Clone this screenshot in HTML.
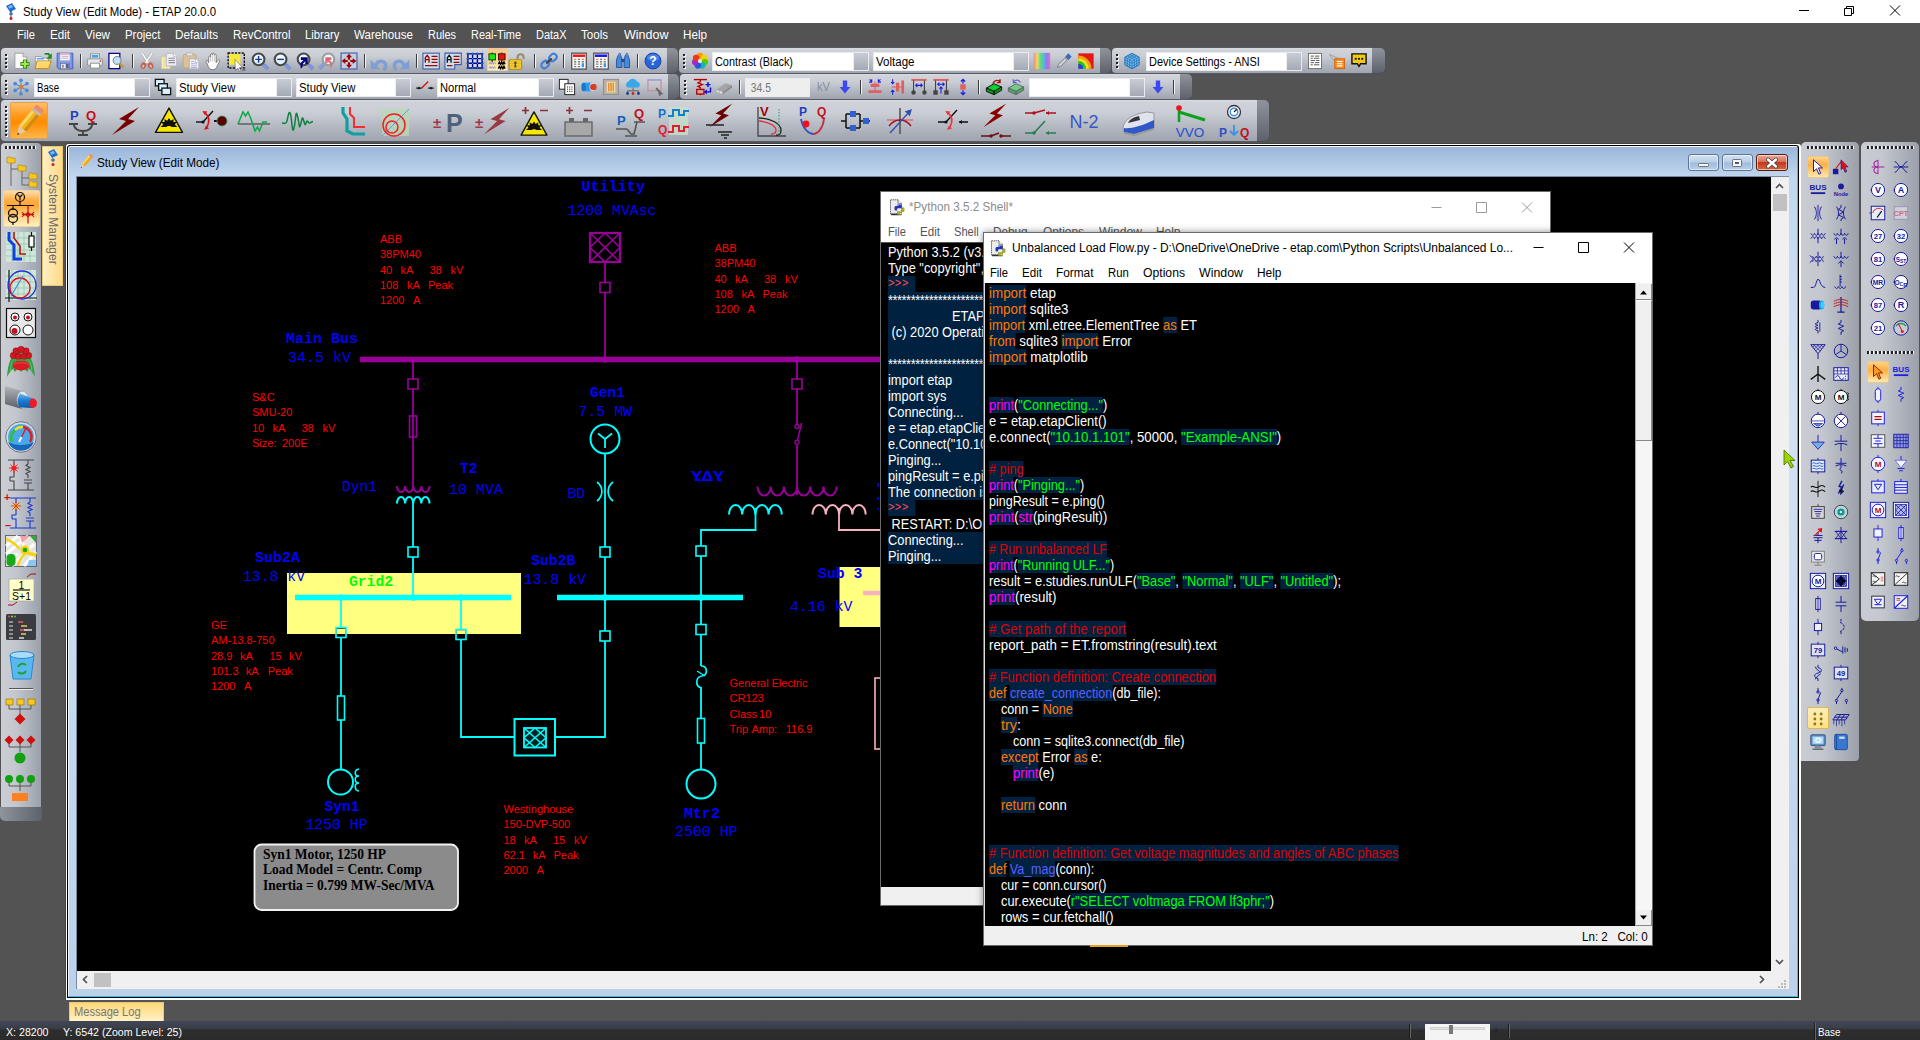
<!DOCTYPE html>
<html><head><meta charset="utf-8"><title>Study View (Edit Mode) - ETAP 20.0.0</title>
<style>
*{box-sizing:border-box;margin:0;padding:0}
html,body{width:1920px;height:1040px;overflow:hidden;background:#535353;font-family:"Liberation Sans",sans-serif;font-size:12px;color:#000}
.a{position:absolute}
.t{position:absolute;white-space:nowrap;line-height:1}
svg{position:absolute;overflow:visible}
#titlebar{left:0;top:0;width:1920px;height:23px;background:#fff}
#menubar{left:0;top:23px;width:1920px;height:25px;background:#535353}
#menubar .t{color:#fff;font-size:12.5px;top:6px}
.tb{position:absolute;height:25px;border-radius:4px 0 0 4px;background:linear-gradient(#d9dce0 0,#cfd2d8 2px,#cbcfd5 30%,#b8bcc5 58%,#9fa4ae);box-shadow:0 1px 0 #545a68,0 -1px 0 #545a68}
.tbcap{position:absolute;height:25px;border-radius:0 5px 5px 0;background:linear-gradient(#8f949d,#5d6169);box-shadow:0 1px 0 #4a4e58}
.grip{position:absolute;width:3px;height:17px;background:repeating-linear-gradient(#222 0,#222 2px,transparent 2px,transparent 4px) 0 0/2px 16px no-repeat,repeating-linear-gradient(#fff 0,#fff 2px,transparent 2px,transparent 4px) 1px 1px/2px 16px no-repeat}
.sep{position:absolute;width:1px;height:14px;background:#3c3c3c;box-shadow:1px 0 0 #f2f2f2}
.combo{position:absolute;height:19px;background:#fff;border:1px solid #e9ebef;font-size:12px;line-height:19px;padding-left:2px;white-space:nowrap;overflow:hidden}
.combo i{position:absolute;right:0;top:0;width:15px;height:17px;background:linear-gradient(#c8ccd4,#a4a9b4);border-left:1px solid #eee}
.s{display:inline-block;transform:scaleX(.92);transform-origin:0 50%}
.wb{top:154px;width:31px;height:17px;border:1px solid #5d7595;border-radius:3px;background:linear-gradient(#d4e2f3,#b9cfe8 48%,#9fbbdc 52%,#b7cfea);box-shadow:inset 0 0 0 1px rgba(255,255,255,.55)}
.pw{position:absolute;background:#fff;border:1px solid #6a6a6a}
.pw .t{font-size:12px}
.code{position:absolute;white-space:pre;font-size:14px;line-height:16px;color:#fff;transform-origin:0 0}
.code div{height:16px}
.code span{display:inline-block;height:16px;vertical-align:top}
.code .ln{transform-origin:0 0}
.k{color:#ff7700;background:#002240}.c{color:#dd0000;background:#002240}.g{color:#02ff02;background:#002240}.d{color:#5e5eff;background:#002240}.b{color:#ff00ff;background:#002240}
.o{background:#002240}.p{color:#ff4a4a;background:#002240;font-family:"Liberation Mono",monospace;font-size:12px;letter-spacing:.3px}

</style></head><body>
<div class="a" id="titlebar">
<svg style="left:4px;top:3px" width="14" height="18" viewBox="0 0 14 18"><path d="M2 3L8 0L12 6L6 9Z" fill="#1f6fd0"/><path d="M4 3.5L7.5 1.8L9 4L5.5 5.8Z" fill="#7db9f2"/><path d="M7 8v4" stroke="#333" stroke-width="1.2"/><circle cx="7" cy="11" r="1.8" fill="#4a6fb0"/><path d="M7 13v2" stroke="#333"/><circle cx="7" cy="15.5" r="1.5" fill="#d02020"/></svg>
<div class="t" style="left:23px;top:6px;font-size:12.4px;color:#000"><span class="s" style="transform:scaleX(0.9218)">Study View (Edit Mode) - ETAP 20.0.0</span></div>
<svg style="left:1780px;top:0" width="140" height="23" viewBox="0 0 140 23"><path d="M19 10.5h10M64.5 8.5h7v7h-7zM66.5 8.5v-2h7v7h-2M110 5.5l10 10M120 5.5l-10 10" stroke="#000" stroke-width="1" fill="none"/></svg>
</div>
<div class="a" id="menubar">
<div class="t" style="left:17px"><span class="s" style="transform:scaleX(0.8930)">File</span></div>
<div class="t" style="left:50px"><span class="s" style="transform:scaleX(0.9282)">Edit</span></div>
<div class="t" style="left:85px"><span class="s" style="transform:scaleX(0.9302)">View</span></div>
<div class="t" style="left:125px"><span class="s" style="transform:scaleX(0.9124)">Project</span></div>
<div class="t" style="left:175px"><span class="s" style="transform:scaleX(0.9376)">Defaults</span></div>
<div class="t" style="left:233px"><span class="s" style="transform:scaleX(0.9195)">RevControl</span></div>
<div class="t" style="left:305px"><span class="s" style="transform:scaleX(0.9027)">Library</span></div>
<div class="t" style="left:354px"><span class="s" style="transform:scaleX(0.9296)">Warehouse</span></div>
<div class="t" style="left:428px"><span class="s" style="transform:scaleX(0.8759)">Rules</span></div>
<div class="t" style="left:471px"><span class="s" style="transform:scaleX(0.8743)">Real-Time</span></div>
<div class="t" style="left:536px"><span class="s" style="transform:scaleX(0.8777)">DataX</span></div>
<div class="t" style="left:581px"><span class="s" style="transform:scaleX(0.9251)">Tools</span></div>
<div class="t" style="left:624px"><span class="s" style="transform:scaleX(1.0007)">Window</span></div>
<div class="t" style="left:683px"><span class="s" style="transform:scaleX(0.9332)">Help</span></div>
</div>
<div class="tb" style="left:1px;top:48px;width:666px"></div><div class="tbcap" style="left:667px;top:48px;width:11px"></div>
<div class="grip" style="left:5px;top:54px"></div>
<svg style="left:13.5px;top:53.0px" width="16" height="16" viewBox="0 0 16 16"><g transform="translate(8 8) scale(1.09) translate(-8 -8)"><path d="M1.5 .8h7.5l3.5 3.5v10.500h-11z" fill="#fbfbfb" stroke="#9a9a9a" stroke-width=".8"/><path d="M9 .8v3.5h3.5" fill="#ddd" stroke="#9a9a9a" stroke-width=".8"/><path d="M6.5 10.800h8.400M10.700 6.600v8.400" stroke="#3d8f12" stroke-width="3.800"/><path d="M7.300 10.800h6.800M10.700 7.400v6.800" stroke="#a6e34e" stroke-width="1.900"/></g></svg>
<svg style="left:35.0px;top:53.0px" width="16" height="16" viewBox="0 0 16 16"><g transform="translate(8 8) scale(1.09) translate(-8 -8)"><path d="M1 4h5.500l1 1.300H13V13H1z" fill="#f2f6fc" stroke="#8a9ab8" stroke-width=".8"/><path d="M2.300 6h6.500" stroke="#4a90e8" stroke-width="1.100"/><path d="M.8 15l1.700-7h13l-2.200 7z" fill="#ffd568" stroke="#b98a14" stroke-width=".9"/><path d="M2.500 14l1.200-5h10.300" stroke="#ffe9a8" stroke-width=".8" fill="none"/><path d="M9.500 1.500h3.500l2 2.500" stroke="#1c8a1c" stroke-width="1.600" fill="none"/><path d="M16 1v5h-5z" fill="#1c8a1c"/></g></svg>
<svg style="left:57.0px;top:53.0px" width="16" height="16" viewBox="0 0 16 16"><g transform="translate(8 8) scale(1.09) translate(-8 -8)"><path d="M.8 .8h14.400v14.400H2.300L.8 13.700z" fill="#6f8be4" stroke="#4a64c0" stroke-width=".9"/><path d="M2 2v11.500l1 1h11V2z" fill="#8ea8f0" opacity=".6"/><rect x="3.500" y="1" width="9" height="6.500" fill="#f4f4f8" stroke="#b8b8c8" stroke-width=".5"/><rect x="3.500" y="1" width="9" height="1.300" fill="#e8a0c0"/><path d="M5 3.800h6M5 5.500h6" stroke="#a9a9b8" stroke-width=".7"/><rect x="4" y="10.200" width="8" height="5" fill="#e8e8f0" stroke="#556" stroke-width=".5"/><rect x="8.700" y="10.700" width="2.800" height="4" fill="#5a5f98"/><rect x="5.500" y="11.500" width="1.200" height="2.500" fill="#667"/></g></svg>
<svg style="left:87.0px;top:53.0px" width="16" height="16" viewBox="0 0 16 16"><g transform="translate(8 8) scale(1.09) translate(-8 -8)"><rect x="4" y="1.5" width="8" height="5" fill="#fff" stroke="#888" stroke-width=".8"/><rect x="5" y="2.5" width="6" height="2.5" fill="#4aa3e8"/><rect x="1" y="6" width="14" height="6" rx="1.2" fill="#e4e6ea" stroke="#888" stroke-width=".8"/><rect x="4" y="10" width="8" height="4.5" fill="#fff" stroke="#888" stroke-width=".8"/><circle cx="13" cy="8" r=".8" fill="#e02020"/></g></svg>
<svg style="left:108.0px;top:53.0px" width="16" height="16" viewBox="0 0 16 16"><g transform="translate(8 8) scale(1.09) translate(-8 -8)"><rect x="1.5" y="1" width="10" height="14" fill="#fff" stroke="#0b0b88" stroke-width="1.2"/><circle cx="9" cy="7.5" r="3.6" fill="#bfe2fb" stroke="#8a8a8a" stroke-width="1"/><path d="M11.5 10.5l3.5 3.5" stroke="#c9962c" stroke-width="2"/></g></svg>
<svg style="left:139.0px;top:53.0px" width="16" height="16" viewBox="0 0 16 16"><g transform="translate(8 8) scale(1.09) translate(-8 -8)"><path d="M3.200 .5L9.800 10.500M12.800 .5L6.200 10.500" stroke="#a8a8a8" stroke-width="2.600"/><path d="M3.200 .5L9.800 10.500M12.800 .5L6.200 10.500" stroke="#f4f4f4" stroke-width="1.500"/><ellipse cx="4.700" cy="12.300" rx="2.500" ry="3.200" transform="rotate(25 4.700 12.300)" fill="#c7634e"/><ellipse cx="11.300" cy="12.300" rx="2.500" ry="3.200" transform="rotate(-25 11.300 12.300)" fill="#c7634e"/><ellipse cx="4.500" cy="12.800" rx=".9" ry="1.500" transform="rotate(25 4.500 12.800)" fill="#c4c8d0"/><ellipse cx="11.500" cy="12.800" rx=".9" ry="1.500" transform="rotate(-25 11.500 12.800)" fill="#c4c8d0"/></g></svg>
<svg style="left:161.0px;top:53.0px" width="16" height="16" viewBox="0 0 16 16"><g transform="translate(8 8) scale(1.09) translate(-8 -8)"><path d="M1 3.500h8.500V15H1z" fill="#efe2a2" stroke="#d0bd88" stroke-width=".8"/><path d="M1.800 4.300v10h7" stroke="#f8f0c8" stroke-width=".8" fill="none"/><path d="M5.500 1h6.500l3 3v8.500H5.500z" fill="#eeeef4" stroke="#b4b4c0" stroke-width=".8"/><path d="M12 1v3h3" fill="#fff" stroke="#b4b4c0" stroke-width=".7"/><path d="M7.500 5.500h6M7.500 7.500h6M7.500 9.500h6" stroke="#8a8a94" stroke-width="1"/></g></svg>
<svg style="left:183.0px;top:53.0px" width="16" height="16" viewBox="0 0 16 16"><g transform="translate(8 8) scale(1.09) translate(-8 -8)"><rect x=".8" y="1.800" width="12" height="12.500" rx="1.800" fill="#dcc096" stroke="#c4a678" stroke-width=".8"/><rect x="4" y=".6" width="5.500" height="2.600" rx=".8" fill="#e8e8ec" stroke="#aaa" stroke-width=".6"/><path d="M6.500 6h5.500l3.200 3.200v6H6.500z" fill="#eeeef4" stroke="#b4b4c0" stroke-width=".8"/><path d="M12 6v3.200h3.200" fill="#fff" stroke="#b4b4c0" stroke-width=".7"/><path d="M8 8.500h3M8 10.500h5.500M8 12.500h5.500M8 14h5.500" stroke="#a8acd8" stroke-width=".8"/></g></svg>
<svg style="left:205.0px;top:53.0px" width="16" height="16" viewBox="0 0 16 16"><g transform="translate(8 8) scale(1.09) translate(-8 -8)"><path d="M4 9.500V4.500c0-1.300 1.700-1.300 1.700 0V2.300c0-1.300 1.700-1.300 1.700 0V1.800c0-1.300 1.800-1.300 1.800 0v.8c0-1.200 1.700-1.200 1.700 0v7l1.500-2.200c.8-1 2.200-.2 1.600.9L11.500 13.500c-.9 1.600-1.900 2.500-3.800 2.500C5 16 3.500 14 3.200 11.500L1.500 8.500c-.5-1 .8-1.700 1.500-.8z" fill="#fff" stroke="#666" stroke-width=".7"/><path d="M5.700 4.500v4M7.400 2.500v6M9.200 2.600v6" stroke="#999" stroke-width=".5"/></g></svg>
<svg style="left:228.0px;top:53.0px" width="16" height="16" viewBox="0 0 16 16"><g transform="translate(8 8) scale(1.09) translate(-8 -8)"><rect x="1.500" y="1.200" width="10.500" height="10.300" fill="#f6e83c"/><rect x=".8" y=".6" width="14.800" height="13.800" fill="none" stroke="#111" stroke-width="1.300" stroke-dasharray="2 1.100"/><path d="M7 6.500l7 7.500-3 .2 1.400 2.600-1.300.6-1.400-2.700L7.500 16.500z" fill="#fff" stroke="#555" stroke-width=".5"/><path d="M16.500 13.500v3.500H13z" fill="#666"/></g></svg>
<svg style="left:252.0px;top:53.0px" width="16" height="16" viewBox="0 0 16 16"><g transform="translate(8 8) scale(1.09) translate(-8 -8)"><rect x="-2.400" y="-1.500" width="5.500" height="3" rx="1" fill="#7c9ae6" stroke="#5c7acc" stroke-width=".5" transform="translate(13 13) rotate(45)"/><circle cx="6.7" cy="6.500" r="5.400" fill="#e2f1fb" stroke="#484848" stroke-width="1.900"/><ellipse cx="6.7" cy="4.600" rx="3.600" ry="1.900" fill="#fff" opacity=".55"/><path d="M3.700 6.500h6M6.700 3.500v6" stroke="#1a3a8a" stroke-width="1.300"/></g></svg>
<svg style="left:274.0px;top:53.0px" width="16" height="16" viewBox="0 0 16 16"><g transform="translate(8 8) scale(1.09) translate(-8 -8)"><rect x="-2.400" y="-1.500" width="5.500" height="3" rx="1" fill="#7c9ae6" stroke="#5c7acc" stroke-width=".5" transform="translate(13 13) rotate(45)"/><circle cx="6.7" cy="6.500" r="5.400" fill="#e2f1fb" stroke="#484848" stroke-width="1.900"/><ellipse cx="6.7" cy="4.600" rx="3.600" ry="1.900" fill="#fff" opacity=".55"/><path d="M3.700 6.500h6" stroke="#1a3a8a" stroke-width="1.300"/></g></svg>
<svg style="left:296.5px;top:53.0px" width="16" height="16" viewBox="0 0 16 16"><g transform="translate(8 8) scale(1.09) translate(-8 -8)"><rect x="-2.400" y="-1.500" width="5.500" height="3" rx="1" fill="#7c9ae6" stroke="#5c7acc" stroke-width=".5" transform="translate(13 13) rotate(45)"/><circle cx="6.7" cy="6.500" r="5.400" fill="#e2f1fb" stroke="#484848" stroke-width="1.900"/><ellipse cx="6.7" cy="4.600" rx="3.600" ry="1.900" fill="#fff" opacity=".55"/><path d="M4.200 4.500h6.300v6.300H8.300V8.300L5.800 10.800v3l-1.800 1-.3-4.800 3-3H4.200z" fill="#000080"/></g></svg>
<svg style="left:318.5px;top:53.0px" width="16" height="16" viewBox="0 0 16 16"><g transform="translate(8 8) scale(1.09) translate(-8 -8)"><rect x="-2.400" y="-1.500" width="5.500" height="3" rx="1" fill="#7c9ae6" stroke="#5c7acc" stroke-width=".5" transform="translate(3 13) rotate(-45)" opacity=".75"/><circle cx="9.3" cy="6.500" r="5.400" fill="#e2f1fb" stroke="#9c9c9c" stroke-width="1.900"/><ellipse cx="9.3" cy="4.600" rx="3.600" ry="1.900" fill="#fff" opacity=".55"/><path d="M12 4.500H6.500v5.500h2V8l2.500 2.500c.8 1.500.5 3.500-.5 4.500 2.500-1 3-4 1.500-6L10 7h2z" fill="#e0686e"/></g></svg>
<svg style="left:341.0px;top:53.0px" width="16" height="16" viewBox="0 0 16 16"><g transform="translate(8 8) scale(1.09) translate(-8 -8)"><rect x=".7" y=".7" width="14.600" height="14.600" fill="#c6cddc" stroke="#3a5ab0" stroke-width="1"/><g fill="#a00000"><path d="M8 1.300l2.800 3.300H9v2.200H7V4.600H5.200z"/><path d="M8 14.700l2.800-3.300H9V9.200H7v2.200H5.200z"/><path d="M1.300 8l3.300-2.800V7h2.200v2H4.600v1.800z"/><path d="M14.700 8l-3.300-2.800V7H9.200v2h2.200v1.800z"/></g></g></svg>
<svg style="left:371.0px;top:53.0px" width="16" height="16" viewBox="0 0 16 16"><g transform="translate(8 8) scale(1.09) translate(-8 -8)"><path d="M5.500 12.500a4.300 4.300 0 1 1 6.500 3.700" stroke="#7f9fd4" stroke-width="3.200" fill="none"/><path d="M.3 6.800l8.700 8.700H.3z" fill="#7f9fd4"/></g></svg>
<svg style="left:393.0px;top:53.0px" width="16" height="16" viewBox="0 0 16 16"><g transform="translate(8 8) scale(1.09) translate(-8 -8)"><path d="M10.500 12.500a4.300 4.300 0 1 0-6.500 3.700" stroke="#7f9fd4" stroke-width="3.200" fill="none"/><path d="M15.700 6.800l-8.700 8.700h8.700z" fill="#7f9fd4"/></g></svg>
<svg style="left:423.0px;top:53.0px" width="16" height="16" viewBox="0 0 16 16"><g transform="translate(8 8) scale(1.09) translate(-8 -8)"><rect x=".6" y=".8" width="15" height="14.500" fill="#cfe0ea" stroke="#3a5ab0" stroke-width="1"/><path d="M2.800 9.500V5l1.700-2.200L6.200 5v4.500M2.800 6.800h3.400" stroke="#a00000" fill="none" stroke-width="1.200"/><path d="M8.500 3.800h5.500M8.500 6.500h5.500M8.500 9.200h5.500M2.500 12.300h11.500" stroke="#a00000" stroke-width="1.200"/></g></svg>
<svg style="left:445.0px;top:53.0px" width="16" height="16" viewBox="0 0 16 16"><g transform="translate(8 8) scale(1.09) translate(-8 -8)"><path d="M.6 .8h15v10.500h-6v4H.6z" fill="#cfe0ea" stroke="#3a5ab0" stroke-width="1"/><path d="M2.800 9.500V5l1.700-2.200L6.200 5v4.500M2.800 6.800h3.400" stroke="#111" fill="none" stroke-width="1.200"/><path d="M8.500 3.800h5.500M8.500 6.500h5.500M8.500 9.200h5.500M2.500 12.300h5" stroke="#a00000" stroke-width="1.200"/></g></svg>
<svg style="left:467.0px;top:53.0px" width="16" height="16" viewBox="0 0 16 16"><g transform="translate(8 8) scale(1.09) translate(-8 -8)"><rect x="1" y="1.200" width="14" height="13.600" fill="#d4dcec"/><path d="M.3 1.500h15.400M.3 5.800h15.400M.3 10.100h15.400M.3 14.400h15.400M1.500 .5v14.800M5.800 .5v14.800M10.200 .5v14.800M14.500 .5v14.800" stroke="#00008b" stroke-width="1.300"/><g fill="#00d8f0"><rect x="1.0" y="1.0" width="1" height="1"/><rect x="1.0" y="5.3" width="1" height="1"/><rect x="1.0" y="9.6" width="1" height="1"/><rect x="1.0" y="13.9" width="1" height="1"/><rect x="5.3" y="1.0" width="1" height="1"/><rect x="5.3" y="5.3" width="1" height="1"/><rect x="5.3" y="9.6" width="1" height="1"/><rect x="5.3" y="13.9" width="1" height="1"/><rect x="9.7" y="1.0" width="1" height="1"/><rect x="9.7" y="5.3" width="1" height="1"/><rect x="9.7" y="9.6" width="1" height="1"/><rect x="9.7" y="13.9" width="1" height="1"/><rect x="14.0" y="1.0" width="1" height="1"/><rect x="14.0" y="5.3" width="1" height="1"/><rect x="14.0" y="9.6" width="1" height="1"/><rect x="14.0" y="13.9" width="1" height="1"/></g></g></svg>
<svg style="left:509.0px;top:53.0px" width="16" height="16" viewBox="0 0 16 16"><g transform="translate(8 8) scale(1.09) translate(-8 -8)"><path d="M8.500 7V4.500c0-3.500 5.500-3.500 5.500 0v1.700" stroke="#9a8a6a" stroke-width="1.900" fill="none"/><rect x=".8" y="6.800" width="11.500" height="8.700" rx="1" fill="#f6d838" stroke="#b88a10" stroke-width="1"/><path d="M1.500 8.700h10M1.500 10.300h10M1.500 11.900h10M1.500 13.500h10" stroke="#e0a818" stroke-width=".7"/><path d="M6.500 8.500a1.200 1.200 0 0 1 .6 2.200l.3 3.300h-1.800l.3-3.300a1.200 1.200 0 0 1 .6-2.200z" fill="#444"/></g></svg>
<svg style="left:541.0px;top:53.0px" width="16" height="16" viewBox="0 0 16 16"><g transform="translate(8 8) scale(1.09) translate(-8 -8)"><g transform="rotate(-42 8 8)" fill="none"><rect x="-.5" y="5.200" width="7.500" height="5.600" rx="2.800" stroke="#3f80d4" stroke-width="1.900"/><rect x="9" y="5.200" width="7.500" height="5.600" rx="2.800" stroke="#3f80d4" stroke-width="1.900"/><path d="M4.500 8h7" stroke="#444" stroke-width="2"/></g></g></svg>
<svg style="left:571.0px;top:53.0px" width="16" height="16" viewBox="0 0 16 16"><g transform="translate(8 8) scale(1.09) translate(-8 -8)"><rect x="1.300" y=".8" width="13.400" height="14.600" fill="#fafafa" stroke="#555" stroke-width="1.200"/><rect x="2.500" y="2" width="11" height="2.300" fill="#f01818"/><path d="M3.500 6.500h2M10.500 6.500h2" stroke="#f08020" stroke-width="1.200"/><path d="M7 6.500h2M3.500 8.700h2M7 8.700h2M10.500 8.700h2M3.500 10.900h2M7 10.900h2M3.500 13.100h2M7 13.100h2" stroke="#777" stroke-width="1.200"/><rect x="10.400" y="10" width="2.200" height="3.700" fill="#3a98f0"/></g></svg>
<svg style="left:593.0px;top:53.0px" width="16" height="16" viewBox="0 0 16 16"><g transform="translate(8 8) scale(1.09) translate(-8 -8)"><rect x="1.300" y=".8" width="13.400" height="14.600" fill="#fafafa" stroke="#555" stroke-width="1.200"/><rect x="2.500" y="2" width="11" height="2.300" fill="#1818f0"/><path d="M3.500 6.500h2M10.500 6.500h2" stroke="#f08020" stroke-width="1.200"/><path d="M7 6.500h2M3.500 8.700h2M7 8.700h2M10.500 8.700h2M3.500 10.900h2M7 10.900h2M3.500 13.100h2M7 13.100h2" stroke="#777" stroke-width="1.200"/><rect x="10.400" y="10" width="2.200" height="3.700" fill="#3a98f0"/></g></svg>
<svg style="left:615.0px;top:53.0px" width="16" height="16" viewBox="0 0 16 16"><g transform="translate(8 8) scale(1.09) translate(-8 -8)"><path d="M2 14V7l1.500-4h2.500L7 7v7zM9 14V7l1-4h2.500L14 7v7z" fill="#4a88d8" stroke="#1d4da0" stroke-width=".8"/><rect x="6.500" y="6" width="3" height="3" fill="#1d4da0"/><path d="M3.500 3l1-2h1l.500 2M10.500 3l.5-2h1l1 2" fill="#7db0ee" stroke="#1d4da0" stroke-width=".6"/></g></svg>
<svg style="left:645.0px;top:53.0px" width="16" height="16" viewBox="0 0 16 16"><g transform="translate(8 8) scale(1.09) translate(-8 -8)"><circle cx="8" cy="8" r="7.300" fill="#2a62d8" stroke="#153a9a" stroke-width=".8"/><ellipse cx="8" cy="5" rx="5.500" ry="3.200" fill="#5a92f0" opacity=".7"/><text x="8" y="12" font-size="11" font-weight="bold" fill="#fff" text-anchor="middle" font-family="Liberation Sans">?</text></g></svg>
<div class="a" style="left:486.500px;top:48px;width:21px;height:23px;background:linear-gradient(#f2c896,#ffcf88 35%,#ffe29c 70%,#fff0c4);border:1px solid #e8d0a8;border-top:0"></div>
<svg style="left:489.0px;top:53.0px" width="16" height="16" viewBox="0 0 16 16"><g transform="translate(8 8) scale(1.09) translate(-8 -8)"><rect x=".6" y="1.400" width="6" height="5.600" fill="#10f010" stroke="#1a3a1a" stroke-width=".9"/><rect x="9.400" y="1.400" width="6" height="5.600" fill="#f01010" stroke="#3a1010" stroke-width=".9"/><path d="M3.600 .2v1.200M12.400 .2v1.200M3.600 7v2M12.400 7v2" stroke="#222" stroke-width="1"/><path d="M.5 11l1-2 1.100 2 1-2 1.100 2 1-2 1 2M.5 15l1-2 1.100 2 1-2 1.100 2 1-2 1 2" stroke="#8a96b8" fill="none" stroke-width=".8"/><path d="M9.200 11l1-2 1.100 2 1-2 1.100 2 1-2 1 2M9.200 15l1-2 1.100 2 1-2 1.100 2 1-2 1 2" stroke="#000" fill="none" stroke-width="1.300"/></g></svg>
<div class="sep" style="left:79.5px;top:54px"></div>
<div class="sep" style="left:131.5px;top:54px"></div>
<div class="sep" style="left:363.5px;top:54px"></div>
<div class="sep" style="left:415.5px;top:54px"></div>
<div class="sep" style="left:533.5px;top:54px"></div>
<div class="sep" style="left:563.0px;top:54px"></div>
<div class="sep" style="left:636.5px;top:54px"></div>
<div class="tb" style="left:679px;top:48px;width:421px"></div><div class="tbcap" style="left:1100px;top:48px;width:11px"></div>
<div class="grip" style="left:683px;top:54px"></div>
<svg style="left:692.0px;top:53.0px" width="16" height="16" viewBox="0 0 16 16"><g transform="translate(8 8) scale(1.09) translate(-8 -8)"><path d="M8 8L5.18 2.14L10.82 2.14z" fill="#f59a00"/><path d="M8 8L10.82 2.14L14.34 6.55z" fill="#f2d200"/><path d="M8 8L14.34 6.55L13.08 12.05z" fill="#5cc800"/><path d="M8 8L13.08 12.05L8.00 14.50z" fill="#14b4b0"/><path d="M8 8L8.00 14.50L2.92 12.05z" fill="#2458dc"/><path d="M8 8L2.92 12.05L1.66 6.55z" fill="#a428cc"/><path d="M8 8L1.66 6.55L5.18 2.14z" fill="#f43410"/><circle cx="8.00" cy="3.40" r="2.900" fill="#f59a00"/><circle cx="11.60" cy="5.13" r="2.900" fill="#f2d200"/><circle cx="12.48" cy="9.02" r="2.900" fill="#5cc800"/><circle cx="10.00" cy="12.14" r="2.900" fill="#14b4b0"/><circle cx="6.00" cy="12.14" r="2.900" fill="#2458dc"/><circle cx="3.52" cy="9.02" r="2.900" fill="#a428cc"/><circle cx="4.40" cy="5.13" r="2.900" fill="#f43410"/><circle cx="8" cy="8" r="2" fill="#d4d6da"/><circle cx="8" cy="8" r="1" fill="#f4f4f4"/></g></svg>
<div class="combo" style="left:712px;top:51.5px;width:157px;color:#000;background:#fff"><span class="s" style="transform:scaleX(0.9066)">Contrast (Black)</span><i></i></div>
<div class="combo" style="left:873px;top:51.5px;width:156px;color:#000;background:#fff"><span class="s" style="transform:scaleX(0.9614)">Voltage</span><i></i></div>
<svg style="left:1034.0px;top:53.0px" width="16" height="16" viewBox="0 0 16 16"><g transform="translate(8 8) scale(1.09) translate(-8 -8)"><defs><linearGradient id="sp"><stop offset="0" stop-color="#f08080"/><stop offset=".2" stop-color="#f0e060"/><stop offset=".42" stop-color="#50e070"/><stop offset=".62" stop-color="#50b0f0"/><stop offset=".8" stop-color="#9070f0"/><stop offset="1" stop-color="#f060c0"/></linearGradient></defs><rect x=".5" y=".5" width="15" height="15" fill="url(#sp)" opacity=".9"/></g></svg>
<svg style="left:1056.0px;top:53.0px" width="16" height="16" viewBox="0 0 16 16"><g transform="translate(8 8) scale(1.09) translate(-8 -8)"><path d="M2 14l1-3 6-6 2 2-6 6z" fill="#c8d0dc" stroke="#777" stroke-width=".8"/><path d="M9 4l3-3 3 3-3 3z" fill="#3a6ab8"/></g></svg>
<svg style="left:1078.0px;top:53.0px" width="16" height="16" viewBox="0 0 16 16"><g transform="translate(8 8) scale(1.09) translate(-8 -8)"><rect x="1" y="1" width="14" height="14" fill="#e01818"/><path d="M1 15V3a12 12 0 0 1 12 12z" fill="#f0a010"/><path d="M1 15V5.500a9.500 9.500 0 0 1 9.500 9.500z" fill="#f0e020"/><path d="M1 15V8a7 7 0 0 1 7 7z" fill="#20c030"/><path d="M1 15v-4.500a4.500 4.500 0 0 1 4.500 4.500z" fill="#2040e0"/><path d="M1 15v-2a2 2 0 0 1 2 2z" fill="#9020c0"/></g></svg>
<div class="tb" style="left:1112px;top:48px;width:260px"></div><div class="tbcap" style="left:1372px;top:48px;width:13px"></div>
<div class="grip" style="left:1116px;top:54px"></div>
<svg style="left:1124.0px;top:53.0px" width="16" height="16" viewBox="0 0 16 16"><g transform="translate(8 8) scale(1.09) translate(-8 -8)"><path d="M8 1l6.500 3.500v7L8 15l-6.500-3.500v-7z" fill="#7cc4f0" stroke="#1464b4" stroke-width=".9"/><path d="M1.500 4.500L8 8l6.500-3.500M8 8v7M3.700 3.300l6.500 3.500v7M5.800 2.200l6.500 3.500v7M12.300 3.300l-6.500 3.500v7M10.200 2.200L3.700 5.700v7M1.500 6.800L8 10.300l6.500-3.500M1.500 9.200L8 12.700l6.500-3.500" stroke="#1464b4" stroke-width=".6" fill="none"/></g></svg>
<div class="combo" style="left:1146px;top:51.5px;width:156px;color:#000;background:#fff"><span class="s" style="transform:scaleX(0.9128)">Device Settings - ANSI</span><i></i></div>
<svg style="left:1307.0px;top:53.0px" width="16" height="16" viewBox="0 0 16 16"><g transform="translate(8 8) scale(1.09) translate(-8 -8)"><rect x="2" y="1" width="12" height="14" fill="#fff" stroke="#666" stroke-width=".8"/><path d="M4 3.500h3M8 3.500h4M4 5.500h2M7 5.500h5M4 7.500h4M9 7.500h3M4 9.500h3M8 9.500h4M4 11.500h2M7 11.500h5" stroke="#555" stroke-width=".9"/></g></svg>
<svg style="left:1329.0px;top:53.0px" width="16" height="16" viewBox="0 0 16 16"><g transform="translate(8 8) scale(1.09) translate(-8 -8)"><path d="M1 2l9 4v8z" fill="none" stroke="#999" stroke-width=".8"/><rect x="6" y="6" width="9" height="9" fill="#ff8a20" stroke="#d06000" stroke-width=".8"/><path d="M8 8.500h5M8 10.500h5M8 12.500h5" stroke="#fff" stroke-width="1"/></g></svg>
<svg style="left:1351.0px;top:53.0px" width="16" height="16" viewBox="0 0 16 16"><g transform="translate(8 8) scale(1.09) translate(-8 -8)"><path d="M1.500 1.500h13v9h-5L8 13l-1.500-2.500h-5z" fill="#f0c818" stroke="#111" stroke-width="1.300"/><circle cx="5" cy="6" r="1" fill="#111"/><circle cx="8" cy="6" r="1" fill="#111"/><circle cx="11" cy="6" r="1" fill="#111"/></g></svg>
<div class="tb" style="left:1px;top:74px;width:667px"></div><div class="tbcap" style="left:668px;top:74px;width:11px"></div>
<div class="grip" style="left:5px;top:80px"></div>
<svg style="left:13.0px;top:79.0px" width="16" height="16" viewBox="0 0 16 16"><g transform="translate(8 8) scale(1.09) translate(-8 -8)"><g stroke="#4a90d8" stroke-width="1"><path d="M8 8L8 2M8 8L13.200 5M8 8L13.200 11M8 8L8 14M8 8L2.800 11M8 8L2.800 5"/></g><g fill="#4a8ad8"><circle cx="8" cy="1.800" r="1.700"/><circle cx="13.400" cy="4.900" r="1.700"/><circle cx="13.400" cy="11.100" r="1.700"/><circle cx="8" cy="14.200" r="1.700"/><circle cx="2.600" cy="11.100" r="1.700"/><circle cx="2.600" cy="4.900" r="1.700"/></g><circle cx="8" cy="8" r="1.900" fill="#e87a20"/></g></svg>
<div class="combo" style="left:34px;top:77.5px;width:116px;color:#000;background:#fff"><span class="s" style="transform:scaleX(0.8041)">Base</span><i></i></div>
<svg style="left:155.0px;top:79.0px" width="16" height="16" viewBox="0 0 16 16"><g transform="translate(8 8) scale(1.09) translate(-8 -8)"><rect x="1" y="1" width="8" height="6" fill="#d8f0ff" stroke="#111" stroke-width="1.200"/><rect x="4" y="5" width="8" height="6" fill="#d8f0ff" stroke="#111" stroke-width="1.200"/><rect x="7" y="9" width="8" height="6" fill="#d8f0ff" stroke="#111" stroke-width="1.200"/></g></svg>
<div class="combo" style="left:176px;top:77.5px;width:116px;color:#000;background:#fff"><span class="s" style="transform:scaleX(0.9413)">Study View</span><i></i></div>
<div class="combo" style="left:296px;top:77.5px;width:115px;color:#000;background:#fff"><span class="s" style="transform:scaleX(0.9413)">Study View</span><i></i></div>
<svg style="left:417.0px;top:79.0px" width="16" height="16" viewBox="0 0 16 16"><g transform="translate(8 8) scale(1.09) translate(-8 -8)"><path d="M0 9h5M11 9h5" stroke="#111" stroke-width="1.100"/><path d="M5 9l6-6" stroke="#e01010" stroke-width="1.300"/><path d="M4 9l-2-1.500v3zM12 9l2-1.500v3z" fill="#111"/></g></svg>
<div class="combo" style="left:437px;top:77.5px;width:117px;color:#000;background:#fff"><span class="s" style="transform:scaleX(0.9309)">Normal</span><i></i></div>
<svg style="left:559.0px;top:79.0px" width="16" height="16" viewBox="0 0 16 16"><g transform="translate(8 8) scale(1.09) translate(-8 -8)"><rect x="1" y="1" width="8" height="9" fill="#fff" stroke="#222" stroke-width=".9"/><rect x="6" y="5" width="9" height="10" fill="#fff" stroke="#222" stroke-width=".9"/><path d="M8 8h5M8 10h5M8 12h5" stroke="#222" stroke-width=".9" stroke-dasharray="1 1"/></g></svg>
<svg style="left:581.0px;top:79.0px" width="16" height="16" viewBox="0 0 16 16"><g transform="translate(8 8) scale(1.09) translate(-8 -8)"><path d="M3 4h8v8H3z" fill="#2a9af0"/><ellipse cx="3" cy="8" rx="2" ry="4" fill="#1878c8"/><ellipse cx="11" cy="8" rx="2.500" ry="4" fill="#d8e8f8"/><circle cx="12" cy="8" r="3" fill="#d84020"/></g></svg>
<svg style="left:603.0px;top:79.0px" width="16" height="16" viewBox="0 0 16 16"><g transform="translate(8 8) scale(1.09) translate(-8 -8)"><rect x="1" y="1" width="14" height="14" fill="#b8b0a8" stroke="#888" stroke-width=".8"/><rect x="4" y="3" width="8" height="10" fill="#f0d8a0"/><path d="M6 4v8M8 4v8M10 4v8" stroke="#d88020" stroke-width="1.100"/></g></svg>
<svg style="left:625.0px;top:79.0px" width="16" height="16" viewBox="0 0 16 16"><g transform="translate(8 8) scale(1.09) translate(-8 -8)"><path d="M3 8.500a3 3 0 0 1 1-5.500 4 4 0 0 1 7.500 0 3 3 0 0 1 1.500 5.500z" fill="#3aa8e8"/><path d="M8 8.500v3M3 14v-2.500h10V14" stroke="#555" fill="none" stroke-width=".8"/><circle cx="3" cy="14" r="1.300" fill="#223a88"/><circle cx="8" cy="14" r="1.300" fill="#d02020"/><circle cx="13" cy="14" r="1.300" fill="#223a88"/></g></svg>
<svg style="left:647.0px;top:79.0px" width="16" height="16" viewBox="0 0 16 16"><g transform="translate(8 8) scale(1.09) translate(-8 -8)"><rect x="1.500" y="1.500" width="12" height="10" fill="none" stroke="#c890a0" stroke-width="1.200"/><path d="M1.500 1.500h12" stroke="#9aa0e0" stroke-width="1.200"/><path d="M9 9l5 5-2 .3.800 1.700" stroke="#666" stroke-width="1.500" fill="#666"/></g></svg>
<div class="tb" style="left:680px;top:74px;width:500px"></div><div class="tbcap" style="left:1180px;top:74px;width:12px"></div>
<div class="grip" style="left:684px;top:80px"></div>
<svg style="left:694.0px;top:79.0px" width="16" height="16" viewBox="0 0 16 16"><g transform="translate(8 8) scale(1.09) translate(-8 -8)"><path d="M.5 1.200h12" stroke="#b00000" stroke-width="1.300"/><path d="M6.500 1.200v1.800l-2.300 1.200 4.300 1.600-4.300 1.600 2.300 1.200v1.600" stroke="#b00000" fill="none" stroke-width="1.100"/><rect x="3.200" y="10.200" width="6.600" height="4.300" fill="#e0a0a0" stroke="#b00000" stroke-width="1.200"/><path d="M5.500 14.500l1 1.300 1-1.300" fill="#b00000"/><path d="M13.500 3.500v4.500M11.200 5.800h4.600M15.800 8.500v4h-4" stroke="#0a0af0" stroke-width="1.300" fill="none"/><path d="M12.500 10.300l-3 2.200 3 2.200z" fill="#0a0af0"/></g></svg>
<svg style="left:716.0px;top:79.0px" width="16" height="16" viewBox="0 0 16 16"><g transform="translate(8 8) scale(1.09) translate(-8 -8)"><path d="M.8 10.500l8.500-6 6 1.800-8.500 6z" fill="#a4a4a4"/><path d="M.8 10.500v2.300l6 1.800v-2.300z" fill="#e4e4e4" stroke="#999" stroke-width=".4"/><path d="M6.800 12.300v2.300l8.500-6V6.300z" fill="#8a8a8a"/><path d="M3.700 11.400v2.300" stroke="#999" stroke-width=".5"/></g></svg>
<svg style="left:837.0px;top:79.0px" width="16" height="16" viewBox="0 0 16 16"><g transform="translate(8 8) scale(1.09) translate(-8 -8)"><path d="M6 2h4v6h3l-5 6-5-6h3z" fill="#3c48f0"/></g></svg>
<svg style="left:867.0px;top:79.0px" width="16" height="16" viewBox="0 0 16 16"><g transform="translate(8 8) scale(1.09) translate(-8 -8)"><path d="M8 1v14" stroke="#1010e0" stroke-width="0"/><rect x="4" y="5" width="8" height="3" fill="#e06060"/><rect x="2" y="11" width="12" height="2.500" fill="#e06060"/><path d="M8 3v10" stroke="#e06060" stroke-width="1"/><path d="M3 1l2 2M13 1l-2 2M2.500 3.500h2.500V1M13.500 3.500H11V1" stroke="#2020e0" stroke-width="1" fill="none"/></g></svg>
<svg style="left:889.0px;top:79.0px" width="16" height="16" viewBox="0 0 16 16"><g transform="translate(8 8) scale(1.09) translate(-8 -8)"><rect x="7" y="4" width="3" height="8" fill="#e06060"/><rect x="12" y="2" width="2.500" height="12" fill="#e06060"/><path d="M3 8h10" stroke="#e06060"/><path d="M4 1v4M2.500 3.500L4 5l1.500-1.500M4 15v-4M2.500 12.500L4 11l1.500 1.500" stroke="#2020e0" stroke-width="1" fill="none"/></g></svg>
<svg style="left:911.0px;top:79.0px" width="16" height="16" viewBox="0 0 16 16"><g transform="translate(8 8) scale(1.09) translate(-8 -8)"><path d="M1 1.500h14" stroke="#e06060" stroke-width="1.800"/><path d="M3 2v10M13 2v10" stroke="#444" stroke-width="1"/><circle cx="3" cy="13" r="2" fill="#444"/><circle cx="13" cy="13" r="2" fill="#444"/><path d="M5 6.500h6M6.500 5L5 6.500 6.500 8M9.500 5L11 6.500 9.500 8" stroke="#2020e0" stroke-width="1" fill="none"/></g></svg>
<svg style="left:933.0px;top:79.0px" width="16" height="16" viewBox="0 0 16 16"><g transform="translate(8 8) scale(1.09) translate(-8 -8)"><path d="M1 1.500h14" stroke="#e06060" stroke-width="1.800"/><path d="M3 2v10M13 2v10" stroke="#444" stroke-width="1"/><path d="M1 11h4v4H1zM11 11h4v4h-4z" fill="#444"/><path d="M5 5.500h6M6.500 4L5 5.500 6.500 7M9.500 4L11 5.500 9.500 7M8 14V8M6.500 9.500L8 8l1.500 1.500" stroke="#2020e0" stroke-width="1" fill="none"/></g></svg>
<svg style="left:955.0px;top:79.0px" width="16" height="16" viewBox="0 0 16 16"><g transform="translate(8 8) scale(1.09) translate(-8 -8)"><rect x="5.500" y="5.500" width="5" height="5" fill="#e06060"/><path d="M8 1v4M8 15v-4M6 3l2-2 2 2M6 13l2 2 2-2" stroke="#2020e0" stroke-width="1.200" fill="none"/></g></svg>
<svg style="left:986.0px;top:79.0px" width="16" height="16" viewBox="0 0 16 16"><g transform="translate(8 8) scale(1.09) translate(-8 -8)"><path d="M1 9l7-4 7 3-7 4z" fill="#10d030" stroke="#111" stroke-width=".9"/><path d="M1 9v3l7 3v-3zM8 12v3l7-4V8z" fill="#0a9a20" stroke="#111" stroke-width=".9"/><path d="M7 5c1-3 4-4 6-2M13.500 1v3h-3" stroke="#a01010" stroke-width="1.300" fill="none"/></g></svg>
<svg style="left:1008.0px;top:79.0px" width="16" height="16" viewBox="0 0 16 16"><g transform="translate(8 8) scale(1.09) translate(-8 -8)"><path d="M1 9l7-4 7 3-7 4z" fill="#70d080" stroke="#667" stroke-width=".9"/><path d="M1 9v3l7 3v-3zM8 12v3l7-4V8z" fill="#50a860" stroke="#667" stroke-width=".9"/><path d="M12 4c-1-3-4-3-6-1M5.500 1v3h3" stroke="#6060d0" stroke-width="1.100" fill="none"/></g></svg>
<svg style="left:1150.0px;top:79.0px" width="16" height="16" viewBox="0 0 16 16"><g transform="translate(8 8) scale(1.09) translate(-8 -8)"><path d="M6 2h4v6h3l-5 6-5-6h3z" fill="#3c48f0"/></g></svg>
<div class="sep" style="left:738.5px;top:80px"></div>
<div class="sep" style="left:859.5px;top:80px"></div>
<div class="sep" style="left:977.5px;top:80px"></div>
<div class="sep" style="left:1172.5px;top:80px"></div>
<div class="combo" style="left:745px;top:77.5px;width:65px;color:#777;background:#eee"><span class="s" style="transform:scaleX(0.8613)">&nbsp;34.5</span></div>
<div class="t" style="left:817px;top:81px;font-size:12px;color:#8a8e98"><span class="s" style="transform:scaleX(0.9275)">kV</span></div>
<div class="combo" style="left:1029px;top:77.5px;width:116px;color:#000;background:#fff"><i></i></div>
<div class="tb" style="left:1px;top:100px;width:1256px;height:41px;border-radius:4px 0 0 4px;background:linear-gradient(#d9dce0 0,#cfd2d8 2px,#cbcfd5 30%,#b8bcc5 58%,#9fa4ae)"></div><div class="tbcap" style="left:1257px;top:100px;width:12px;height:41px"></div>
<div class="a" style="left:5px;top:106px;width:3px;height:31px;background:repeating-linear-gradient(#222 0,#222 2px,transparent 2px,transparent 4px) 0 0/2px 30px no-repeat,repeating-linear-gradient(#fff 0,#fff 2px,transparent 2px,transparent 4px) 1px 1px/2px 30px no-repeat"></div>
<div class="a" style="left:10px;top:102px;width:38px;height:37px;border-radius:2px;background:linear-gradient(#ffbe6a,#ff9a1c 35%,#ff8c00 55%,#ffb648);border:1px solid #e0a050"></div>
<svg style="left:11.0px;top:103.0px" width="36" height="36" viewBox="0 0 36 36"><g transform="rotate(40 18 18) translate(18 18) scale(1.18) translate(-18 -18)"><rect x="14" y="3" width="8" height="4" fill="#e88a70"/><rect x="14" y="7" width="8" height="2.500" fill="#bbb"/><rect x="14" y="9.500" width="8" height="17" fill="#f0b020"/><rect x="14" y="9.500" width="2.700" height="17" fill="#ffd860"/><rect x="19.300" y="9.500" width="2.700" height="17" fill="#d08a10"/><path d="M14 26.500L18 33.500 22 26.500z" fill="#e8c8a0"/><path d="M17 31.500L18 33.500 19 31.500z" fill="#333"/></g></svg>
<svg style="left:65.0px;top:105.0px" width="36" height="36" viewBox="0 0 36 36"><text x="5" y="15" font-size="13" fill="#2040c0" font-family="Liberation Sans" font-weight="bold">P</text><text x="21" y="15" font-size="13" fill="#c01020" font-family="Liberation Sans" font-weight="bold">Q</text><path d="M4 19h9M23 19h9M8.500 19c1 5 5 7 9.500 7s8.500-2 9.500-7M18 26v3M13 30h10" stroke="#444" stroke-width="1.800" fill="none"/></svg>
<svg style="left:108.0px;top:103.0px" width="36" height="36" viewBox="0 0 36 36"><path transform="translate(0 0) scale(1)" d="M31 4L11 16l7 2L4 32 27 18l-7-2z" fill="#7a0000"/></svg>
<svg style="left:151.0px;top:103.0px" width="36" height="36" viewBox="0 0 36 36"><g transform="translate(1.8000000000000007 1.5) scale(0.9)"><path d="M18 4L33 31H3z" fill="#f8e800" stroke="#111" stroke-width="1.600" stroke-linejoin="round"/><path d="M18 15l2 3 3-2 0 3.500 3.500 0-2 3 3 2.500H8.500l3-2.500-2-3 3.500 0 0-3.500 3 2z" fill="#111"/><path d="M13 29a5 5 0 0 1 10 0z" fill="#f8e800"/></g></svg>
<svg style="left:193.0px;top:103.0px" width="36" height="36" viewBox="0 0 36 36"><path d="M3 19h7" stroke="#111" stroke-width="1.400"/><circle cx="10" cy="19" r="1.600" fill="#111"/><path d="M10 19L20 8" stroke="#111" stroke-width="1.400"/><path d="M12 10c4 3 5 8 2 14" stroke="#e01020" stroke-width="1.600" fill="none"/><path d="M9.500 8l5 .5-3 3.500zM11 27l2-4.500 3 3z" fill="#e01020"/><path d="M21 18h3" stroke="#111" stroke-width="2"/><circle cx="29" cy="18" r="5" fill="#5a0000" stroke="#30a070" stroke-width=".8"/></svg>
<svg style="left:236.0px;top:103.0px" width="36" height="36" viewBox="0 0 36 36"><path d="M2 21h32" stroke="#333" stroke-width="1"/><path d="M2 21L7 9l2.500 4L12 9l3 7 4 12 2.500-4 2 4 3.500-9 4 0" stroke="#10a848" stroke-width="1.500" fill="none"/></svg>
<svg style="left:280.0px;top:103.0px" width="36" height="36" viewBox="0 0 36 36"><path d="M2 20c3 0 4 2 5-2s2-12 3.500-7 1.500 22 3.500 14 1.500-20 3.500-12 1.500 14 3 9 1.500-10 3-5 1.500 6 2.500 3 1.500-2 2.500-.5 3-1 4.500-1" stroke="#108040" stroke-width="1.500" fill="none"/></svg>
<svg style="left:336.0px;top:103.0px" width="36" height="36" viewBox="0 0 36 36"><path d="M7 4v6l4 6v12l6 3h12" stroke="#10a0a0" stroke-width="3.200" fill="none"/><path d="M14 4v7l4 4v9h11" stroke="#f03030" stroke-width="2" fill="none"/></svg>
<svg style="left:376.0px;top:103.0px" width="36" height="36" viewBox="0 0 36 36"><rect x="6" y="6" width="27" height="27" fill="#b8d8b8" opacity=".8"/><path d="M6 33L33 6" stroke="#60a0e0" stroke-width="1"/><circle cx="18" cy="22" r="11" fill="none" stroke="#f02020" stroke-width="1.500"/><circle cx="16" cy="24" r="6" fill="none" stroke="#f02020" stroke-width="1.500"/></svg>
<svg style="left:427.0px;top:103.0px" width="40" height="36" viewBox="0 0 40 36"><text x="6" y="25" font-size="15" fill="#a03848" font-family="Liberation Sans" font-weight="bold">±</text><text x="19" y="29" font-size="25" fill="#50607c" font-family="Liberation Sans" font-weight="bold">P</text></svg>
<svg style="left:471.0px;top:103.0px" width="40" height="36" viewBox="0 0 40 36"><text x="4" y="25" font-size="15" fill="#a03848" font-family="Liberation Sans" font-weight="bold">±</text><path transform="translate(9 1) scale(0.95)" d="M31 4L11 16l7 2L4 32 27 18l-7-2z" fill="#9a3a40"/></svg>
<svg style="left:516.0px;top:103.0px" width="36" height="36" viewBox="0 0 36 36"><path d="M6 7.500h7M9.500 4v7M24 7.500h8" stroke="#8a3040" stroke-width="1.700"/><g transform="translate(2.5199999999999996 5.5) scale(0.86)"><path d="M18 4L33 31H3z" fill="#f8e800" stroke="#111" stroke-width="1.600" stroke-linejoin="round"/><path d="M18 15l2 3 3-2 0 3.500 3.500 0-2 3 3 2.500H8.500l3-2.500-2-3 3.500 0 0-3.500 3 2z" fill="#111"/><path d="M13 29a5 5 0 0 1 10 0z" fill="#f8e800"/></g></svg>
<svg style="left:560.0px;top:103.0px" width="36" height="36" viewBox="0 0 36 36"><path d="M6 7.500h7M9.500 4v7M24 7.500h8" stroke="#8a3040" stroke-width="1.700"/><rect x="5" y="19" width="27" height="14" fill="#a8a8a8" stroke="#666" stroke-width="1.400"/><rect x="9" y="15" width="5" height="4" fill="#666"/><rect x="23" y="15" width="5" height="4" fill="#666"/></svg>
<svg style="left:613.0px;top:103.0px" width="36" height="36" viewBox="0 0 36 36"><text x="4" y="22" font-size="13" fill="#1060c0" font-family="Liberation Sans" font-weight="bold">P</text><text x="21" y="15" font-size="13" fill="#c01020" font-family="Liberation Sans" font-weight="bold">Q</text><path d="M3 26h11M21 19h11M14 26l4 5 3 0 3-12M12 33h12" stroke="#555" stroke-width="1.600" fill="none"/></svg>
<svg style="left:656.0px;top:103.0px" width="36" height="36" viewBox="0 0 36 36"><rect x="13" y="4" width="19" height="28" fill="#c8e0c8" opacity=".8"/><text x="2" y="15" font-size="12" fill="#1070d0" font-family="Liberation Sans" font-weight="bold">P</text><text x="2" y="31" font-size="12" fill="#e02030" font-family="Liberation Sans" font-weight="bold">Q</text><path d="M12 13h5V7h6v5h5V8h5" stroke="#1080d0" stroke-width="2" fill="none"/><path d="M12 29h5v-6h6v5h5v-4h5" stroke="#e02030" stroke-width="2" fill="none"/></svg>
<svg style="left:702.0px;top:103.0px" width="36" height="36" viewBox="0 0 36 36"><path transform="translate(4 -3) scale(0.85)" d="M31 4L11 16l7 2L4 32 27 18l-7-2z" fill="#6a0000"/><path d="M4 22h18M16 29h14M19 32h8M22 35h3" stroke="#222" stroke-width="1.600"/></svg>
<svg style="left:752.0px;top:103.0px" width="36" height="36" viewBox="0 0 36 36"><path d="M6 4v29h28" stroke="#444" stroke-width="1.300" fill="none"/><text x="8" y="13" font-size="13" fill="#a00010" font-family="Liberation Sans" font-weight="bold">V</text><path d="M7 15c12 0 22 6 22 12s-3 5-5 5" stroke="#222" stroke-width="1.300" fill="none"/><path d="M7 18c10 1 17 5 17 9s-3 4-5 4" stroke="#e03040" stroke-width="1.300" fill="none"/><path d="M27 6v27" stroke="#30a060" stroke-width="1" stroke-dasharray="1.500 1.500"/></svg>
<svg style="left:796.0px;top:103.0px" width="36" height="36" viewBox="0 0 36 36"><text x="3" y="13" font-size="12" fill="#2040c0" font-family="Liberation Sans" font-weight="bold">P</text><text x="21" y="13" font-size="12" fill="#c01020" font-family="Liberation Sans" font-weight="bold">Q</text><path d="M5 16c2 10 8 15 12 15" stroke="#3050c0" stroke-width="1.800" fill="none"/><path d="M17 31c5 0 10-6 11-15" stroke="#c03040" stroke-width="1.800" fill="none"/><circle cx="10" cy="21" r="3.400" fill="#f01020"/></svg>
<svg style="left:839.0px;top:103.0px" width="36" height="36" viewBox="0 0 36 36"><path d="M2 18h5M7 11v14M7 11h14M7 25h14M21 11v14M21 18h10" stroke="#111" stroke-width="1.500" fill="none"/><rect x="11" y="8" width="6" height="6" fill="#3060d0"/><rect x="11" y="22" width="6" height="6" fill="#3060d0"/><rect x="24" y="15" width="6" height="6" fill="#3060d0"/></svg>
<svg style="left:882.0px;top:103.0px" width="36" height="36" viewBox="0 0 36 36"><path d="M5 17h26" stroke="#e07080" stroke-width="1.600"/><path d="M18 5v26" stroke="#555" stroke-width="1.600"/><path d="M7 23c6-8 16-8 22 0" stroke="#a01020" stroke-width="1.300" fill="none"/><path d="M8 30L29 7M29 7l-5 1.500 3.500 3.500z" stroke="#3050b0" stroke-width="1.300" fill="#3050b0"/></svg>
<svg style="left:935.0px;top:103.0px" width="36" height="36" viewBox="0 0 36 36"><path d="M3 19h8M24 19h9" stroke="#111" stroke-width="1.400"/><circle cx="11" cy="19" r="1.600" fill="#111"/><path d="M11 19L22 7" stroke="#111" stroke-width="1.400"/><path d="M13 10c4 3 5 8 2 14" stroke="#f03040" stroke-width="1.600" fill="none"/><path d="M10.500 8l5 .5-3 3.500zM12 27l2-4.500 3 3z" fill="#f03040"/><path d="M24 19l3-2v4z" fill="#111"/></svg>
<svg style="left:978.0px;top:103.0px" width="36" height="36" viewBox="0 0 36 36"><path transform="translate(2 -3) scale(0.85)" d="M31 4L11 16l7 2L4 32 27 18l-7-2z" fill="#8a0000"/><path d="M3 33h10M13 33l8-3M22 33h11" stroke="#6a1010" stroke-width="1.600"/><circle cx="13" cy="33" r="1.700" fill="#6a1010"/><circle cx="23" cy="33" r="1.700" fill="#6a1010"/></svg>
<svg style="left:1022.0px;top:103.0px" width="36" height="36" viewBox="0 0 36 36"><path d="M3 10h9M12 10l11-3M24 10h10" stroke="#b01020" stroke-width="1.600"/><circle cx="12" cy="10" r="1.700" fill="#b01020"/><path d="M24 10l3-2v4z" fill="#b01020"/><path d="M3 30h9M12 30l11-12M24 30h10" stroke="#208050" stroke-width="1.600"/><circle cx="12" cy="30" r="1.700" fill="#208050"/><path d="M24 30l3-2v4z" fill="#208050"/></svg>
<svg style="left:1066.0px;top:103.0px" width="36" height="36" viewBox="0 0 36 36"><text x="18" y="25" font-size="18" fill="#3858c0" text-anchor="middle" font-family="Liberation Sans">N-2</text></svg>
<svg style="left:1120.0px;top:103.0px" width="36" height="36" viewBox="0 0 36 36"><path d="M3 24c2-8 10-13 24-15l7 1v15l-20 6-10-2z" fill="#e0e4ea" stroke="#888" stroke-width=".8"/><path d="M4 25c6 1 18-2 30-8v8l-20 6-10-2z" fill="#3058c8"/><path d="M8 20c2-4 6-6 11-7l1 4z" fill="#334"/><path d="M4 29l10 2 20-6v2l-20 6-10-2z" fill="#999"/></svg>
<svg style="left:1172.0px;top:103.0px" width="38" height="36" viewBox="0 0 38 36"><path d="M7 6v13" stroke="#10a020" stroke-width="2.600"/><path d="M7 9l26 8" stroke="#10a020" stroke-width="3"/><circle cx="7" cy="5" r="2.800" fill="#f01020"/><text x="18" y="34" font-size="13.500" fill="#2050d0" text-anchor="middle" font-family="Liberation Sans">VVO</text></svg>
<svg style="left:1215.0px;top:103.0px" width="38" height="36" viewBox="0 0 38 36"><circle cx="19" cy="9" r="6.500" fill="#fff" stroke="#334" stroke-width="1.300"/><circle cx="19" cy="9" r="3.800" fill="none" stroke="#4090e0" stroke-width="1.500"/><path d="M19 9l3-3" stroke="#223" stroke-width="1.300"/><text x="4" y="34" font-size="12" fill="#3050c0" font-family="Liberation Sans" font-weight="bold">P</text><text x="25" y="34" font-size="12" fill="#c01020" font-family="Liberation Sans" font-weight="bold">Q</text><path d="M19 22v10M15 28l4 4 4-4" stroke="#4090e0" stroke-width="1.800" fill="none"/></svg>
<div class="a" style="left:1px;top:143px;width:40px;height:665px;border-radius:4px 4px 0 0;background:linear-gradient(90deg,#cbcfd5 0,#c4c8ce 35%,#b1b6bf 65%,#9a9fa9)"></div>
<div class="a" style="left:0;top:807px;width:42px;height:14px;border-radius:0 0 4px 5px;background:linear-gradient(90deg,#8f949d,#5d6169)"></div>
<div class="a" style="left:5px;top:146px;width:32px;height:3px;background:repeating-linear-gradient(90deg,#222 0,#222 2px,#fff 2px,#fff 3px,transparent 3px,transparent 4px)"></div>
<div class="a" style="left:42px;top:146px;width:21px;height:140px;background:linear-gradient(90deg,#fff0c4,#ffd987);border:1px solid #e8c878"></div>
<svg style="left:46px;top:149px" width="14" height="18" viewBox="0 0 14 18"><path d="M2 3L8 0L12 6L6 9Z" fill="#1f6fd0"/><path d="M4 3.500L7.500 1.800L9 4L5.500 5.800Z" fill="#7db9f2"/><circle cx="7" cy="11" r="1.800" fill="#4a6fb0"/><circle cx="7" cy="15.500" r="1.500" fill="#d02020"/></svg>
<div class="t" style="left:58.500px;top:174px;font-size:12px;color:#6a6a6a;transform:rotate(90deg);transform-origin:0 0">System Manager</div>
<div class="a" style="left:3px;top:190px;width:37px;height:37px;border-radius:2px;background:linear-gradient(#ffdcaa,#ffb048 25%,#ffa632 40%,#ffd082 70%,#fff0bc);border:1px solid #efd4a0"></div>
<svg style="left:0.5px;top:154.0px" width="36" height="36" viewBox="0 0 36 36"><path d="M10 6v26M10 15h9M21 17v14M21 24h9M21 31h9" stroke="#666" stroke-width="1" fill="none"/><path d="M6 3h3l1 1h4v5h-8z" fill="#f8c820" stroke="#a08010" stroke-width=".6"/><path d="M17 11h3l1 1h4v5h-8z" fill="#f8c820" stroke="#a08010" stroke-width=".6"/><path d="M28 19h3l1 1h4v5h-8z" fill="#f8c820" stroke="#a08010" stroke-width=".6"/><path d="M28 27h3l1 1h4v5h-8z" fill="#f8c820" stroke="#a08010" stroke-width=".6"/></svg>
<svg style="left:3.0px;top:191.0px" width="36" height="36" viewBox="0 0 36 36"><circle cx="17" cy="6" r="4.500" fill="none" stroke="#111" stroke-width="1.200"/><path d="M17 6l-2.500-2.500M17 6l2.500-2.500M17 6v3.500M17 10.500v4M4 14.500h27M10 14.500v4M10 31v3" stroke="#111" stroke-width="1.200" fill="none"/><ellipse cx="10" cy="22" rx="4.500" ry="4" fill="none" stroke="#111" stroke-width="1.300"/><ellipse cx="10" cy="27.500" rx="4.500" ry="4" fill="none" stroke="#111" stroke-width="1.300"/><path d="M25 14.500v18M19 21c2 3 4 3 6 0 2 3 4 3 6 0M19 26c2-3 4-3 6 0 2-3 4-3 6 0M19 23.500h12" stroke="#c01010" stroke-width="1.200" fill="none"/></svg>
<svg style="left:4.0px;top:230.0px" width="34" height="34" viewBox="0 0 34 34"><rect x="2" y="2" width="30" height="30" fill="#cfe6da"/><path d="M2 8h30M2 14h30M2 20h30M2 26h30M8 2v30M14 2v30M20 2v30M26 2v30" stroke="#88c0a0" stroke-width=".6"/><path d="M5 2v8l5 5v14h8" stroke="#1040e0" stroke-width="3" fill="none"/><path d="M10 2v6l6 8v8h6" stroke="#c01010" stroke-width="1.600" fill="none"/><rect x="25" y="6" width="5" height="11" fill="#fff" stroke="#111" stroke-width="1.200"/><path d="M27.500 2v4M27.500 17v4" stroke="#111" stroke-width="1.200"/></svg>
<svg style="left:4.0px;top:268.0px" width="34" height="34" viewBox="0 0 34 34"><rect x="2" y="2" width="30" height="30" fill="#cfe6da"/><path d="M2 8h30M2 14h30M2 20h30M2 26h30M8 2v30M14 2v30M20 2v30M26 2v30" stroke="#88c0a0" stroke-width=".6"/><path d="M5 2v32M1 30h32" stroke="#111" stroke-width="1.200"/><circle cx="18" cy="17" r="14" fill="none" stroke="#2030e0" stroke-width="1.300"/><circle cx="16" cy="20" r="10" fill="none" stroke="#e01020" stroke-width="1.300"/><path d="M7 28L19 8" stroke="#3090e0" stroke-width="1.100"/></svg>
<svg style="left:4.0px;top:306.0px" width="34" height="34" viewBox="0 0 34 34"><rect x="2.500" y="2.500" width="29" height="29" fill="#e8e8e8" stroke="#111" stroke-width="1.200"/><circle cx="11" cy="11" r="4" fill="#fff" stroke="#111"/><circle cx="24" cy="11" r="4" fill="#fff" stroke="#111"/><circle cx="11" cy="24" r="5" fill="#fff" stroke="#111"/><circle cx="24" cy="24" r="5" fill="#fff" stroke="#111"/><circle cx="11" cy="11.500" r="2" fill="#c01020"/><circle cx="24" cy="11.500" r="2" fill="#c01020"/><circle cx="10.500" cy="25" r="3" fill="#c01020"/></svg>
<svg style="left:4.0px;top:344.0px" width="34" height="34" viewBox="0 0 34 34"><path d="M3 33c1-14 4-24 14-26 10 2 13 12 14 26-2-4-4-7-6-8l-2 3-3-4-3 4-3-4-3 4-2-3c-2 1-4 4-6 8z" fill="#34a046"/><path d="M6 27c1-9 4-15 11-18M28 27c-1-9-4-15-11-18M10 25c1-8 3-13 7-16M24 25c-1-8-3-13-7-16M17 9v14" stroke="#8ad898" stroke-width=".5" fill="none"/><ellipse cx="17" cy="21.500" rx="8.500" ry="5" fill="#d81c24"/><path d="M9 21c3-3 13-3 16 0" stroke="#f05058" stroke-width=".8" fill="none"/><g fill="#d01820" stroke="#7a0a10" stroke-width=".4"><circle cx="9.500" cy="11.500" r="3.300"/><circle cx="24.500" cy="11.500" r="3.300"/><circle cx="14.500" cy="12.500" r="3.300"/><circle cx="19.500" cy="12.500" r="3.300"/><circle cx="12" cy="7" r="3.200"/><circle cx="22" cy="7" r="3.200"/><circle cx="17" cy="5.500" r="3.300"/></g><path d="M5 19c5-5 19-5 24 0-5-3-19-3-24 0z" fill="#34a046"/></svg>
<svg style="left:4.0px;top:382.0px" width="34" height="34" viewBox="0 0 34 34"><defs><linearGradient id="cg" x1="0" y1="0" x2="0" y2="1"><stop offset="0" stop-color="#b4b8bc"/><stop offset=".45" stop-color="#8a8e94"/><stop offset="1" stop-color="#5a5e64"/></linearGradient><linearGradient id="cb" x1="0" y1="0" x2="0" y2="1"><stop offset="0" stop-color="#6ab8f0"/><stop offset=".5" stop-color="#1a7cd0"/><stop offset="1" stop-color="#0c58a8"/></linearGradient></defs><path d="M1 4l17 5c5 2 7 6 7 10s-2 8-7 8L1 22z" fill="url(#cg)"/><ellipse cx="19" cy="18" rx="6" ry="9" fill="#e4e8ec" stroke="#9a9ea4" stroke-width=".8" transform="rotate(-8 19 18)"/><path d="M16 11.500l13 5v9.500l-13-.5c-3-3-3-10 0-14z" fill="url(#cb)"/><ellipse cx="29" cy="21.300" rx="4" ry="4.700" fill="#ea1c24"/></svg>
<svg style="left:4.0px;top:420.0px" width="34" height="34" viewBox="0 0 34 34"><circle cx="17" cy="17" r="15.300" fill="#d8dce2" stroke="#70747c" stroke-width="1"/><circle cx="17" cy="17" r="13" fill="#48a8ec"/><path d="M8 22a10 10 0 0 1 3-12" stroke="#30c030" stroke-width="2.500" fill="none"/><path d="M11 10a10 10 0 0 1 8-3" stroke="#f0e020" stroke-width="2.500" fill="none"/><path d="M19 7a10 10 0 0 1 7 15" stroke="#e02020" stroke-width="2.500" fill="none"/><path d="M15 22l7-14" stroke="#e01828" stroke-width="1.400"/><path d="M15 22l2.500-5" stroke="#fff" stroke-width="1.800"/><path d="M4 22a14 14 0 0 0 26 0 20 12 0 0 1-26 0z" fill="#1868b8"/></svg>
<svg style="left:4.0px;top:458.0px" width="34" height="34" viewBox="0 0 34 34"><path d="M4 2h26M4 32h26M10 2v5M10 13v6M10 26v6M24 2v4M24 6l-2 1.500 4 2-4 2 4 2-4 2 2 1.500v3M20 22h8M20 25h8M24 25v7M10 19H6v4M6 23h4v3" stroke="#444" stroke-width="1.100" fill="none"/><circle cx="10" cy="10" r="2.600" fill="#f02020"/><path d="M10 5v10M5 10h10M6.500 6.500l7 7M13.500 6.500l-7 7" stroke="#f02020" stroke-width=".9"/></svg>
<svg style="left:6.0px;top:496.0px" width="34" height="34" viewBox="0 0 34 34"><path d="M4 2h26M4 32h26M10 2v5M10 13v6M10 26v6M24 2v4M24 6l-2 1.500 4 2-4 2 4 2-4 2 2 1.500v3M20 22h8M20 25h8M24 25v7M10 19H6v4M6 23h4v3" stroke="#1838d0" stroke-width="1.100" fill="none"/><circle cx="10" cy="10" r="2.600" fill="#f8d020"/><path d="M10 5v10M5 10h10M6.500 6.500l7 7M13.500 6.500l-7 7" stroke="#e04010" stroke-width=".9"/></svg>
<div class="t" style="left:4px;top:492px;font-size:11px;font-weight:bold;color:#d01010">+</div><div class="t" style="left:5px;top:520px;font-size:11px;font-weight:bold;color:#d01010">–</div>
<svg style="left:4.0px;top:534.0px" width="34" height="34" viewBox="0 0 34 34"><rect x="1.500" y="1.500" width="31" height="31" fill="#e4e4e0" stroke="#667" stroke-width="1"/><path d="M2 12L14 2M2 20L24 2M8 32L30 10M2 26l12-6M20 32l12-14M16 2l4 10" stroke="#fff" stroke-width="3"/><path d="M16 2h10l-8 7z" fill="#f4a0a8"/><path d="M26 2h6v7z" fill="#28b028"/><path d="M25 26h7v6h-9z" fill="#8ac8f0"/><rect x="2.500" y="20" width="9" height="12" rx="4" fill="#18a818"/><path d="M2 5c6 2 10 6 14 10M32 20c-6 0-10-2-13-5M14 32c1-6 4-10 8-13M23 19l9 3" stroke="#f2d414" stroke-width="2.400" fill="none"/><circle cx="21" cy="16" r="4.500" fill="#f2d414"/><circle cx="21" cy="16" r="2.300" fill="#18a818"/></svg>
<svg style="left:4.0px;top:572.0px" width="34" height="34" viewBox="0 0 34 34"><rect x="5" y="7" width="25" height="22" fill="#ffffc8" stroke="#aaa" stroke-width=".8"/><path d="M9 18h17" stroke="#111" stroke-width="1.200"/><text x="17.500" y="16.500" font-size="10.500" text-anchor="middle" font-family="Liberation Sans">1</text><text x="17.500" y="28" font-size="10.500" text-anchor="middle" font-family="Liberation Sans">S+1</text><path d="M23 5l4-3h5M4 33l5 0 4-3" stroke="#a01010" stroke-width="1" fill="none"/></svg>
<svg style="left:4.0px;top:610.0px" width="34" height="34" viewBox="0 0 34 34"><rect x="2" y="4" width="30" height="26" rx="1.500" fill="#3a3c42"/><circle cx="5" cy="6.500" r="1" fill="#e05050"/><circle cx="8" cy="6.500" r="1" fill="#e0c040"/><circle cx="11" cy="6.500" r="1" fill="#50c050"/><path d="M5 12h4M5 16h4M5 20h4M5 24h4M5 28h4" stroke="#aaa" stroke-width="1.300"/><path d="M14 12h5M16 20h7" stroke="#e06060" stroke-width="1.300"/><path d="M17 16h6M17 24h5" stroke="#e8c860" stroke-width="1.300"/><path d="M20 20h8M15 28h5" stroke="#ddd" stroke-width="1.300"/></svg>
<svg style="left:5.0px;top:649.0px" width="32" height="32" viewBox="0 0 32 32"><path d="M5 6h24l-3 24H8z" fill="#5ab8f0" stroke="#2a88c8" stroke-width="1"/><ellipse cx="17" cy="6" rx="12" ry="3.500" fill="#a8dcf8" stroke="#2a88c8"/><path d="M13 18a5 5 0 0 1 8-2M21 22a5 5 0 0 1-8 1" stroke="#20a030" stroke-width="2" fill="none"/></svg>
<div class="a" style="left:9px;top:688px;width:24px;height:1px;background:#555;box-shadow:0 1px 0 #eee"></div>
<svg style="left:3.0px;top:695.5px" width="34" height="34" viewBox="0 0 34 34"><path d="M6 9v4h22V9M17 9v9" stroke="#555" stroke-width="1" fill="none"/><rect x="3" y="3" width="7" height="6" fill="#f8c820" stroke="#886a10" stroke-width=".6"/><rect x="14" y="3" width="7" height="6" fill="#f8c820" stroke="#886a10" stroke-width=".6"/><rect x="25" y="3" width="7" height="6" fill="#f8c820" stroke="#886a10" stroke-width=".6"/><path d="M17 17.500l5.500 5.500-5.500 5.500-5.500-5.500z" fill="#d01010"/></svg>
<svg style="left:3.0px;top:734.0px" width="34" height="34" viewBox="0 0 34 34"><path d="M6 9v4h22V9M17 9v9" stroke="#555" stroke-width="1" fill="none"/><path d="M6 1.5l4.500 4.500-4.500 4.500-4.500-4.500z" fill="#d01010"/><path d="M17 1.5l4.500 4.500-4.500 4.500-4.500-4.500z" fill="#d01010"/><path d="M28 1.5l4.500 4.500-4.500 4.500-4.500-4.500z" fill="#d01010"/><circle cx="17" cy="24" r="5.5" fill="#10a010"/></svg>
<svg style="left:3.0px;top:772.5px" width="34" height="34" viewBox="0 0 34 34"><path d="M6 9v4h22V9M17 9v9" stroke="#555" stroke-width="1" fill="none"/><circle cx="6" cy="6" r="4" fill="#10a010"/><circle cx="17" cy="6" r="4" fill="#10a010"/><circle cx="28" cy="6" r="4" fill="#10a010"/><rect x="9" y="20" width="16" height="8" fill="#ff8020"/></svg>
<!-- MDI child frame -->
<div class="a" style="left:65px;top:143px;width:1736px;height:857px;background:#fff;border-top:1px solid #444;border-left:1px solid #444;border-radius:3px 3px 0 0"></div>
<div class="a" style="left:67px;top:145px;width:1732px;height:853px;background:#000;border-radius:3px 3px 0 0"></div>
<div class="a" style="left:68px;top:146px;width:1730px;height:851px;border-radius:2px 2px 0 0;background:linear-gradient(#9ab6d9 0,#b3cae7 18px,#c2d7ef 31px,#d2e2f5 280px,#c3d7ee 70%,#bcd2ea 100%);border-right:1px solid #21c8e8;border-bottom:1px solid #21c8e8;border-top:1px solid #f4f8fc;border-left:1px solid #e8f0fa"></div>
<svg style="left:78px;top:154px" width="16" height="17" viewBox="0 0 16 17"><g transform="rotate(40 8 8)"><rect x="6" y="-1" width="4" height="2" fill="#e88a70"/><rect x="6" y="1" width="4" height="11" fill="#f0a818"/><rect x="6" y="1" width="1.500" height="11" fill="#ffd870"/><path d="M6 12l2 4 2-4z" fill="#e8c8a0"/><path d="M7.400 14.800l.6 1.200.6-1.200z" fill="#333"/></g></svg>
<div class="t" style="left:97px;top:157px;font-size:12px"><span class="s" style="transform:scaleX(0.9787)">Study View (Edit Mode)</span></div>
<!-- window buttons -->
<div class="a wb" style="left:1688px"></div><div class="a wb" style="left:1722px"></div>
<div class="a wb" style="left:1756px;width:32px;background:linear-gradient(#e9aa9c,#d9705a 45%,#c23a20 50%,#d5673f);border-color:#5a1a10"></div>
<svg style="left:1688px;top:154px" width="100" height="18" viewBox="0 0 100 18"><rect x="10.500" y="9.500" width="10" height="3" rx="1" fill="#f4f6fa" stroke="#555" stroke-width=".8"/><rect x="44.500" y="5.500" width="9" height="7" rx="1" fill="#f4f6fa" stroke="#555" stroke-width=".8"/><rect x="47" y="8" width="4" height="2" fill="#4a5a78"/><path d="M80 5.500l8 7M88 5.500l-8 7" stroke="#444" stroke-width="4" stroke-linecap="round"/><path d="M80 5.500l8 7M88 5.500l-8 7" stroke="#fff" stroke-width="2.400" stroke-linecap="round"/></svg>
<!-- canvas -->
<div class="a" style="left:76px;top:176px;width:1713px;height:813px;background:#f0f0f0;border-left:1px solid #7a8aa0;border-top:1px solid #7a8aa0"></div>
<div class="a" id="canvas" style="left:77px;top:177px;width:1694px;height:794px;background:#000"></div>
<!-- scrollbars -->
<div class="a" style="left:1773px;top:194px;width:14px;height:17px;background:#c1c1c1"></div>
<div class="a" style="left:94px;top:973px;width:17px;height:14px;background:#c1c1c1"></div>
<svg style="left:1771px;top:177px" width="17" height="812" viewBox="0 0 17 812"><path d="M5 11l3.500-3.500L12 11M5 783l3.500 3.500L12 783" stroke="#505050" stroke-width="1.700" fill="none"/><g fill="#bbb"><rect x="13" y="803" width="2" height="2"/><rect x="10" y="806" width="2" height="2"/><rect x="13" y="806" width="2" height="2"/><rect x="7" y="809" width="2" height="2"/><rect x="10" y="809" width="2" height="2"/><rect x="13" y="809" width="2" height="2"/></g></svg>
<svg style="left:77px;top:971px" width="1694" height="17" viewBox="0 0 1694 17"><path d="M10 5L6.500 8.500 10 12M1683 5l3.500 3.500L1683 12" stroke="#505050" stroke-width="1.700" fill="none"/></svg>
<!-- message log tab -->
<div class="a" style="left:69px;top:1002px;width:95px;height:19px;background:linear-gradient(#ffd779,#fff1c4);border:1px solid #e8c878;border-bottom:0"></div>
<div class="t" style="left:74px;top:1006px;font-size:12px;color:#777"><span class="s" style="transform:scaleX(0.9244)">Message Log</span></div>
<!-- status bar -->
<div class="a" style="left:0;top:1021px;width:1920px;height:19px;background:linear-gradient(#404655,#3a3f4a 35%,#2d2d2d 50%,#2b2b2b)"></div>
<div class="t" style="left:6px;top:1027px;font-size:11.500px;color:#fff"><span class="s" style="transform:scaleX(0.9230)">X: 28200</span></div>
<div class="t" style="left:63px;top:1027px;font-size:11.500px;color:#fff"><span class="s" style="transform:scaleX(0.9215)">Y: 6542 (Zoom Level: 25)</span></div>
<div class="t" style="left:1818px;top:1027px;font-size:11.500px;color:#fff"><span class="s" style="transform:scaleX(0.8582)">Base</span></div>
<div class="a" style="left:1814px;top:1023px;width:1px;height:17px;background:#1c1c1c;box-shadow:1px 0 0 #666"></div>
<div class="a" style="left:1409px;top:1024px;width:1px;height:14px;background:#1c1c1c;box-shadow:1px 0 0 #666"></div>
<div class="a" style="left:1508px;top:1024px;width:1px;height:14px;background:#1c1c1c;box-shadow:1px 0 0 #666"></div>
<div class="a" style="left:1425px;top:1024px;width:65px;height:16px;background:#f4f4f4"></div>
<div class="a" style="left:1430px;top:1027px;width:55px;height:3px;background:#e4e4e4;border:1px solid #d0d0d0"></div>
<div class="a" style="left:1449px;top:1025px;width:4px;height:9px;background:#777"></div>
<div class="t" style="left:1417px;top:1025px;font-size:11px;color:#222">-</div><div class="t" style="left:1493px;top:1025px;font-size:11px;color:#222">+</div>
<svg style="left:0;top:0" width="1920" height="1040" viewBox="0 0 1920 1040"><defs><clipPath id="cv"><rect x="77" y="177" width="1694" height="794"/></clipPath></defs><g clip-path="url(#cv)">
<rect x="287" y="573" width="234" height="61" fill="#ffff80"/><rect x="839.5" y="567" width="60" height="60" fill="#ffff80"/>
<g stroke="#990099" fill="none" stroke-width="1.800">
<rect x="590" y="233" width="30" height="29" stroke-width="2.200"/><path d="M590 233l30 29M620 233l-30 29M605 233l15 14.500-15 14.500-15-14.500z" stroke-width="1.600"/>
<path d="M605 262V359M413 359V486M797 359V424.500M797 444.500V495"/>
<path d="M360 359.500H900" stroke-width="5.500"/>
<rect x="409.500" y="416" width="7" height="21" stroke-width="1.600"/>
<path d="M797.500 440.500l4-17.500" stroke-width="1.500"/><circle cx="797" cy="442.300" r="2.100" fill="#000" stroke-width="1.300"/><circle cx="797" cy="426.500" r="2" stroke-width="1.300"/>
</g>
<rect x="600" y="282.5" width="10" height="10" fill="#000" stroke="#990099" stroke-width="1.600"/><rect x="408" y="379" width="10" height="10" fill="#000" stroke="#990099" stroke-width="1.600"/><rect x="792" y="379" width="10" height="10" fill="#000" stroke="#990099" stroke-width="1.600"/>
<path d="M397 486a4.06 6 0 0 0 8.12 0a4.06 6 0 0 0 8.12 0a4.06 6 0 0 0 8.12 0a4.06 6 0 0 0 8.12 0" stroke="#990099" stroke-width="2" fill="none"/><path d="M757.5 486.5a6.6 9 0 0 0 13.2 0a6.6 9 0 0 0 13.2 0a6.6 9 0 0 0 13.2 0a6.6 9 0 0 0 13.2 0a6.6 9 0 0 0 13.2 0a6.6 9 0 0 0 13.2 0" stroke="#990099" stroke-width="2" fill="none"/>
<circle cx="605" cy="359.500" r="3.200" fill="#990099"/><circle cx="413" cy="360" r="3" fill="#990099"/><circle cx="797" cy="359.500" r="3.200" fill="#990099"/>
<g stroke="#00ffff" fill="none" stroke-width="1.800">
<path d="M295 597.500H511M557 597.500H743" stroke-width="5.500"/>
<path d="M413 499V597M341 597V769M461 597V737H514M555 737H605V454M701 597V530H755.500V508M701 597V666M701 688V769"/>
<rect x="337.500" y="696" width="7" height="24" stroke-width="1.600" fill="#000"/><rect x="697.500" y="718.500" width="7" height="24.500" stroke-width="1.600" fill="#000"/>
<circle cx="340.500" cy="782" r="12.500" stroke-width="2"/><path d="M359 769c-5 1-5 7 0 7-5 0-5 7 0 7-5 0-5 7 0 8" stroke-width="1.600"/>
<circle cx="701" cy="784" r="14.500" stroke-width="2"/>
<circle cx="605" cy="439" r="14.500" stroke-width="2" fill="#000"/><path d="M605 439v9M605 439l-7-5.500M605 439l7-5.500" stroke-width="1.800"/>
<path d="M597 482c6.500 5 6.500 14 0 19M613 482c-6.500 5-6.500 14 0 19" stroke-width="1.700"/>
<rect x="514.500" y="719" width="40.500" height="36.500" stroke-width="2"/><rect x="524" y="728" width="22" height="19.500" stroke-width="1.800" fill="#022"/><path d="M524 728l22 19.500M546 728l-22 19.500M535 728l11 9.750-11 9.750-11-9.750z" stroke-width="1.500"/>
<path d="M701 666c7 0 7 9 1 10-7 1-7 11 0 12" stroke-width="1.700"/><path d="M697 671l8 5" stroke-width="1.200"/>
</g>
<rect x="408" y="547" width="10" height="10" fill="#000" stroke="#00ffff" stroke-width="1.600"/><rect x="336" y="627.5" width="10" height="10" fill="#000" stroke="#00ffff" stroke-width="1.600"/><rect x="456" y="629.5" width="10" height="10" fill="#000" stroke="#00ffff" stroke-width="1.600"/><rect x="336.800" y="628.800" width="8.400" height="5.200" fill="#ffff80"/><rect x="456.800" y="630.300" width="8.400" height="3.700" fill="#ffff80"/><rect x="600" y="547" width="10" height="10" fill="#000" stroke="#00ffff" stroke-width="1.600"/><rect x="600" y="631" width="10" height="10" fill="#000" stroke="#00ffff" stroke-width="1.600"/><rect x="696" y="546" width="10" height="10" fill="#000" stroke="#00ffff" stroke-width="1.600"/><rect x="696" y="624.5" width="10" height="10" fill="#000" stroke="#00ffff" stroke-width="1.600"/>
<path d="M397 503.5a4.06 6.5 0 0 1 8.12 0a4.06 6.5 0 0 1 8.12 0a4.06 6.5 0 0 1 8.12 0a4.06 6.5 0 0 1 8.12 0" stroke="#00ffff" stroke-width="2" fill="none"/><path d="M729 514.5a6.6 9.5 0 0 1 13.2 0a6.6 9.5 0 0 1 13.2 0a6.6 9.5 0 0 1 13.2 0a6.6 9.5 0 0 1 13.2 0" stroke="#00ffff" stroke-width="2" fill="none"/>
<circle cx="341" cy="597.500" r="3.200" fill="#00ffff"/>
<circle cx="413" cy="597.500" r="3.200" fill="#00ffff"/>
<circle cx="461" cy="597.500" r="3.200" fill="#00ffff"/>
<circle cx="605" cy="597.500" r="3.200" fill="#00ffff"/>
<circle cx="701" cy="597.500" r="3.200" fill="#00ffff"/>
<path d="M812.5 514.5a6.65 9.5 0 0 1 13.3 0a6.65 9.5 0 0 1 13.3 0a6.65 9.5 0 0 1 13.3 0a6.65 9.5 0 0 1 13.3 0" stroke="#f7b2c0" stroke-width="2" fill="none"/>
<path d="M839 508V530H900" stroke="#f7b2c0" stroke-width="1.800" fill="none"/><path d="M863 593H900" stroke="#f7b2c0" stroke-width="4.500"/><rect x="875" y="678" width="30" height="71" stroke="#f7b2c0" stroke-width="1.600" fill="none"/>
<path d="M878 483v4M878 497v3M878 508v2" stroke="#0000ff" stroke-width="1.500"/>
<text x="581.5" y="190.5" textLength="63.5" lengthAdjust="spacingAndGlyphs" fill="#0000ff" font-family="Liberation Mono" font-size="15" font-weight="bold">Utility</text>
<text x="567.5" y="214.5" textLength="89.0" lengthAdjust="spacingAndGlyphs" fill="#0000ff" font-family="Liberation Mono" font-size="15" font-weight="normal">1200 MVAsc</text>
<text x="286" y="342.5" textLength="72" lengthAdjust="spacingAndGlyphs" fill="#0000ff" font-family="Liberation Mono" font-size="15" font-weight="bold">Main Bus</text>
<text x="288" y="361.5" textLength="63" lengthAdjust="spacingAndGlyphs" fill="#0000ff" font-family="Liberation Mono" font-size="15" font-weight="normal">34.5 kV</text>
<text x="590" y="396.5" textLength="35" lengthAdjust="spacingAndGlyphs" fill="#0000ff" font-family="Liberation Mono" font-size="15" font-weight="bold">Gen1</text>
<text x="578.5" y="415.5" textLength="53.5" lengthAdjust="spacingAndGlyphs" fill="#0000ff" font-family="Liberation Mono" font-size="15" font-weight="normal">7.5 MW</text>
<text x="460" y="473.0" textLength="17.5" lengthAdjust="spacingAndGlyphs" fill="#0000ff" font-family="Liberation Mono" font-size="15" font-weight="bold">T2</text>
<text x="449" y="494.0" textLength="54" lengthAdjust="spacingAndGlyphs" fill="#0000ff" font-family="Liberation Mono" font-size="15" font-weight="normal">10 MVA</text>
<text x="342" y="490.5" textLength="35" lengthAdjust="spacingAndGlyphs" fill="#0000ff" font-family="Liberation Mono" font-size="15" font-weight="normal">Dyn1</text>
<text x="567.5" y="497.5" textLength="17.5" lengthAdjust="spacingAndGlyphs" fill="#0000ff" font-family="Liberation Mono" font-size="15" font-weight="normal">BD</text>
<text x="691" y="480.5" textLength="33" lengthAdjust="spacingAndGlyphs" fill="#0000ff" font-family="Liberation Mono" font-size="15" font-weight="bold">Y∆Y</text>
<path d="M697 480h4M699 478v4M718 480h4M720 478v4" stroke="#0000ff" stroke-width="1"/>
<text x="255" y="561.5" textLength="45" lengthAdjust="spacingAndGlyphs" fill="#0000ff" font-family="Liberation Mono" font-size="15" font-weight="bold">Sub2A</text>
<text x="243" y="580.5" textLength="62" lengthAdjust="spacingAndGlyphs" fill="#0000ff" font-family="Liberation Mono" font-size="15" font-weight="normal">13.8 kV</text>
<text x="349" y="585.5" textLength="44" lengthAdjust="spacingAndGlyphs" fill="#00ff00" font-family="Liberation Mono" font-size="15" font-weight="bold">Grid2</text>
<text x="531" y="564.5" textLength="44.5" lengthAdjust="spacingAndGlyphs" fill="#0000ff" font-family="Liberation Mono" font-size="15" font-weight="bold">Sub2B</text>
<text x="523.5" y="584.0" textLength="62.5" lengthAdjust="spacingAndGlyphs" fill="#0000ff" font-family="Liberation Mono" font-size="15" font-weight="normal">13.8 kV</text>
<text x="818" y="577.5" textLength="44.5" lengthAdjust="spacingAndGlyphs" fill="#0000ff" font-family="Liberation Mono" font-size="15" font-weight="bold">Sub 3</text>
<text x="790" y="610.5" textLength="62.5" lengthAdjust="spacingAndGlyphs" fill="#0000ff" font-family="Liberation Mono" font-size="15" font-weight="normal">4.16 kV</text>
<text x="324.5" y="810.5" textLength="35.0" lengthAdjust="spacingAndGlyphs" fill="#0000ff" font-family="Liberation Mono" font-size="15" font-weight="bold">Syn1</text>
<text x="305.5" y="828.5" textLength="62.0" lengthAdjust="spacingAndGlyphs" fill="#0000ff" font-family="Liberation Mono" font-size="15" font-weight="normal">1250 HP</text>
<text x="684" y="817.5" textLength="36" lengthAdjust="spacingAndGlyphs" fill="#0000ff" font-family="Liberation Mono" font-size="15" font-weight="bold">Mtr2</text>
<text x="675" y="835.5" textLength="62.5" lengthAdjust="spacingAndGlyphs" fill="#0000ff" font-family="Liberation Mono" font-size="15" font-weight="normal">2500 HP</text>
<text y="243.0" fill="#ff0000" font-family="Liberation Sans" font-size="11"><tspan x="380">ABB</tspan></text>
<text y="258.4" fill="#ff0000" font-family="Liberation Sans" font-size="11"><tspan x="380">38PM40</tspan></text>
<text y="273.7" fill="#ff0000" font-family="Liberation Sans" font-size="11"><tspan x="380">40</tspan><tspan x="400.6">kA</tspan><tspan x="429.5">38</tspan><tspan x="450.5">kV</tspan></text>
<text y="289.1" fill="#ff0000" font-family="Liberation Sans" font-size="11"><tspan x="380">108</tspan><tspan x="407">kA</tspan><tspan x="428">Peak</tspan></text>
<text y="304.4" fill="#ff0000" font-family="Liberation Sans" font-size="11"><tspan x="380">1200</tspan><tspan x="413">A</tspan></text>
<text y="252.0" fill="#ff0000" font-family="Liberation Sans" font-size="11"><tspan x="714.5">ABB</tspan></text>
<text y="267.4" fill="#ff0000" font-family="Liberation Sans" font-size="11"><tspan x="714.5">38PM40</tspan></text>
<text y="282.7" fill="#ff0000" font-family="Liberation Sans" font-size="11"><tspan x="714.5">40</tspan><tspan x="735.1">kA</tspan><tspan x="764.0">38</tspan><tspan x="785.0">kV</tspan></text>
<text y="298.1" fill="#ff0000" font-family="Liberation Sans" font-size="11"><tspan x="714.5">108</tspan><tspan x="741.5">kA</tspan><tspan x="762.5">Peak</tspan></text>
<text y="313.4" fill="#ff0000" font-family="Liberation Sans" font-size="11"><tspan x="714.5">1200</tspan><tspan x="747.5">A</tspan></text>
<text y="401.0" fill="#ff0000" font-family="Liberation Sans" font-size="11"><tspan x="252">S&amp;C</tspan></text>
<text y="416.4" fill="#ff0000" font-family="Liberation Sans" font-size="11"><tspan x="252">SMU-20</tspan></text>
<text y="431.7" fill="#ff0000" font-family="Liberation Sans" font-size="11"><tspan x="252">10</tspan><tspan x="272.6">kA</tspan><tspan x="301.5">38</tspan><tspan x="322.5">kV</tspan></text>
<text y="447.1" fill="#ff0000" font-family="Liberation Sans" font-size="11"><tspan x="252">Size:</tspan><tspan x="282">200E</tspan></text>
<text y="629.0" fill="#ff0000" font-family="Liberation Sans" font-size="11"><tspan x="211">GE</tspan></text>
<text y="644.4" fill="#ff0000" font-family="Liberation Sans" font-size="11"><tspan x="211">AM-13.8-750</tspan></text>
<text y="659.7" fill="#ff0000" font-family="Liberation Sans" font-size="11"><tspan x="211">28.9</tspan><tspan x="240">kA</tspan><tspan x="269.5">15</tspan><tspan x="289">kV</tspan></text>
<text y="675.0" fill="#ff0000" font-family="Liberation Sans" font-size="11"><tspan x="211">101.3</tspan><tspan x="245.7">kA</tspan><tspan x="267.7">Peak</tspan></text>
<text y="690.4" fill="#ff0000" font-family="Liberation Sans" font-size="11"><tspan x="211">1200</tspan><tspan x="244">A</tspan></text>
<text y="687.0" fill="#ff0000" font-family="Liberation Sans" font-size="11"><tspan x="729.5">General</tspan><tspan x="771.5">Electric</tspan></text>
<text y="702.4" fill="#ff0000" font-family="Liberation Sans" font-size="11"><tspan x="729.5">CR123</tspan></text>
<text y="717.7" fill="#ff0000" font-family="Liberation Sans" font-size="11"><tspan x="729.5">Class</tspan><tspan x="759.0">10</tspan></text>
<text y="733.0" fill="#ff0000" font-family="Liberation Sans" font-size="11"><tspan x="729.5">Trip</tspan><tspan x="751.5">Amp:</tspan><tspan x="785.75">116.9</tspan></text>
<text y="813.0" fill="#ff0000" font-family="Liberation Sans" font-size="11"><tspan x="503.5">Westinghouse</tspan></text>
<text y="828.4" fill="#ff0000" font-family="Liberation Sans" font-size="11"><tspan x="503.5">150-DVP-500</tspan></text>
<text y="843.7" fill="#ff0000" font-family="Liberation Sans" font-size="11"><tspan x="503.5">18</tspan><tspan x="524.1">kA</tspan><tspan x="553.0">15</tspan><tspan x="574.0">kV</tspan></text>
<text y="859.0" fill="#ff0000" font-family="Liberation Sans" font-size="11"><tspan x="503.5">62.1</tspan><tspan x="532.75">kA</tspan><tspan x="553.5">Peak</tspan></text>
<text y="874.4" fill="#ff0000" font-family="Liberation Sans" font-size="11"><tspan x="503.5">2000</tspan><tspan x="536.5">A</tspan></text>
<rect x="254.500" y="844.500" width="203.500" height="65.500" rx="7" fill="#8b8b8b" stroke="#f2f2f2" stroke-width="1.800"/>
<text x="263" y="858.5" textLength="123" lengthAdjust="spacingAndGlyphs" fill="#000" font-family="Liberation Serif" font-size="14" font-weight="bold">Syn1 Motor, 1250 HP</text>
<text x="263" y="874.0" textLength="159" lengthAdjust="spacingAndGlyphs" fill="#000" font-family="Liberation Serif" font-size="14" font-weight="bold">Load Model = Centr. Comp</text>
<text x="263" y="889.5" textLength="171.5" lengthAdjust="spacingAndGlyphs" fill="#000" font-family="Liberation Serif" font-size="14" font-weight="bold">Inertia = 0.799 MW-Sec/MVA</text>
</g>
<path d="M1784 450l0 15 3.500-3.500 3.500 6.500 2.500-1.500-3.500-6 5 0z" fill="#9fd400" stroke="#3a6a00" stroke-width=".8"/>
</svg>
<div class="pw" style="left:880px;top:191px;width:671px;height:715px">
<svg style="left:8px;top:7px" width="18" height="18" viewBox="0 0 18 18"><path d="M1.500 .8h7.500l3.500 3.500v10.500h-11z" fill="#ececec" stroke="#444" stroke-width=".8" stroke-dasharray="1.500 .6"/><path d="M9 .8v3.500h3.500" fill="#fff" stroke="#555" stroke-width=".7"/><path d="M1.500 14.800l.8 1.400h10.200v-1.400" fill="#333"/><path d="M8.200 5.500h3c1 0 1.600.6 1.600 1.600v2.100H9.500c-.9 0-1.400.5-1.400 1.400v1H7c-1 0-1.500-.7-1.500-1.700V8.500c0-.9.500-1.500 1.500-1.500h1.200z" fill="#2238b0"/><path d="M13.800 8.200c1.200 0 1.700.8 1.700 1.700v1.500c0 1-.6 1.600-1.600 1.600h-1.200v1.300c0 1-.7 1.500-1.600 1.500H9.500c-1 0-1.500-.6-1.500-1.500v-2.100h3.300c.9 0 1.400-.6 1.400-1.400V8.200z" fill="#a8a830"/><circle cx="9" cy="6.600" r=".5" fill="#fff"/><circle cx="11.700" cy="14.500" r=".5" fill="#fff"/></svg>
<div class="t" style="left:28px;top:9px;color:#8c8c8c"><span class="s" style="transform:scaleX(0.9742)">*Python 3.5.2 Shell*</span></div>
<svg style="left:540px;top:0" width="130" height="30" viewBox="0 0 130 30"><path d="M10.500 15.500h10M55.500 10.500h10v10h-10zM101 10.500l10 10M111 10.500l-10 10" stroke="#9a9a9a" stroke-width="1" fill="none"/></svg>
<div class="t" style="left:7px;top:34px;color:#555"><span class="s" style="transform:scaleX(0.9305)">File</span></div>
<div class="t" style="left:39px;top:34px;color:#555"><span class="s" style="transform:scaleX(0.9668)">Edit</span></div>
<div class="t" style="left:73px;top:34px;color:#555"><span class="s" style="transform:scaleX(0.9274)">Shell</span></div>
<div class="t" style="left:112px;top:34px;color:#555"><span class="s" style="transform:scaleX(0.9753)">Debug</span></div>
<div class="t" style="left:161.5px;top:34px;color:#555"><span class="s" style="transform:scaleX(0.9913)">Options</span></div>
<div class="t" style="left:217.75px;top:34px;color:#555"><span class="s" style="transform:scaleX(1.0073)">Window</span></div>
<div class="t" style="left:275px;top:34px;color:#555"><span class="s" style="transform:scaleX(0.9924)">Help</span></div>
<div class="a" style="left:0;top:50px;width:669px;height:645px;background:#000;border-top:1px solid #555"></div>
<div class="a" style="left:0;top:695px;width:669px;height:18px;background:#f0f0f0"></div>
<div class="a" style="left:7px;top:100px;width:662px;height:208px;background:#002240"></div>
<div class="a" style="left:7px;top:340px;width:662px;height:32px;background:#002240"></div>
<div class="code" style="left:6.500px;top:52px;width:700px;overflow:hidden;transform:scaleX(.915)"><div>Python 3.5.2 (v3.5.2:4def2a2901a5, Jun 25 2016, 22:18:55) [MSC v.1900 64 bit (AMD64)] on win32</div><div>Type &quot;copyright&quot;, &quot;credits&quot; or &quot;license()&quot; for more information.</div><div><span class="p">&gt;&gt;&gt; </span></div><div style="letter-spacing:-.5px">************************************************************</div><div>                  ETAP Python API</div><div> (c) 2020 Operation Technology, Inc.</div><div></div><div style="letter-spacing:-.5px">************************************************************</div><div>import etap</div><div>import sys</div><div>Connecting...</div><div>e = etap.etapClient()</div><div>e.Connect(&quot;10.10.1.101&quot;, 50000)</div><div>Pinging...</div><div>pingResult = e.ping()</div><div>The connection is alive</div><div><span class="p">&gt;&gt;&gt; </span></div><div> RESTART: D:\OneDrive\OneDrive - etap.com\Python Scripts\Unbalanced Load Flow.py</div><div>Connecting...</div><div>Pinging...</div></div>
</div>
<div class="pw" style="left:983px;top:232px;width:670px;height:714px;box-shadow:0 0 7px rgba(0,0,0,.45)">
<svg style="left:6px;top:7px" width="18" height="18" viewBox="0 0 18 18"><path d="M1.500 .8h7.500l3.500 3.500v10.500h-11z" fill="#ececec" stroke="#444" stroke-width=".8" stroke-dasharray="1.500 .6"/><path d="M9 .8v3.500h3.500" fill="#fff" stroke="#555" stroke-width=".7"/><path d="M1.500 14.800l.8 1.400h10.200v-1.400" fill="#333"/><path d="M8.200 5.500h3c1 0 1.600.6 1.600 1.600v2.100H9.500c-.9 0-1.400.5-1.400 1.400v1H7c-1 0-1.500-.7-1.500-1.700V8.500c0-.9.500-1.500 1.500-1.500h1.200z" fill="#2238b0"/><path d="M13.800 8.200c1.200 0 1.700.8 1.700 1.700v1.500c0 1-.6 1.600-1.600 1.600h-1.200v1.300c0 1-.7 1.500-1.600 1.500H9.500c-1 0-1.500-.6-1.500-1.500v-2.100h3.300c.9 0 1.400-.6 1.400-1.400V8.200z" fill="#a8a830"/><circle cx="9" cy="6.600" r=".5" fill="#fff"/><circle cx="11.700" cy="14.500" r=".5" fill="#fff"/></svg>
<div class="t" style="left:28px;top:9px;color:#000"><span class="s" style="transform:scaleX(0.9948)">Unbalanced Load Flow.py - D:\OneDrive\OneDrive - etap.com\Python Scripts\Unbalanced Lo...</span></div>
<svg style="left:538px;top:0" width="130" height="30" viewBox="0 0 130 30"><path d="M11.500 14.500h10M56.500 9.500h10v10h-10zM102 9.500l10 10M112 9.500l-10 10" stroke="#000" stroke-width="1" fill="none"/></svg>
<div class="t" style="left:6px;top:34px;color:#000"><span class="s" style="transform:scaleX(0.9305)">File</span></div>
<div class="t" style="left:38px;top:34px;color:#000"><span class="s" style="transform:scaleX(0.9668)">Edit</span></div>
<div class="t" style="left:72px;top:34px;color:#000"><span class="s" style="transform:scaleX(0.9864)">Format</span></div>
<div class="t" style="left:124px;top:34px;color:#000"><span class="s" style="transform:scaleX(0.9425)">Run</span></div>
<div class="t" style="left:159px;top:34px;color:#000"><span class="s" style="transform:scaleX(1.0155)">Options</span></div>
<div class="t" style="left:214.75px;top:34px;color:#000"><span class="s" style="transform:scaleX(1.0307)">Window</span></div>
<div class="t" style="left:273px;top:34px;color:#000"><span class="s" style="transform:scaleX(0.9924)">Help</span></div>
<div class="a" style="left:0;top:50px;width:651px;height:643px;background:#000;border-left:1px solid #ddd"></div>
<div class="a" style="left:651px;top:50px;width:17px;height:643px;background:#f6f6f6;border-left:1px solid #aaa"></div>
<div class="a" style="left:652px;top:51px;width:16px;height:16px;background:#f0f0f0;border-right:1px solid #888;border-bottom:1px solid #888"></div>
<div class="a" style="left:652px;top:67px;width:16px;height:141px;background:#f0f0f0;border-right:1px solid #888;border-bottom:1px solid #888;border-top:1px solid #fff"></div>
<div class="a" style="left:652px;top:677px;width:16px;height:16px;background:#f0f0f0;border-right:1px solid #888;border-bottom:1px solid #888"></div>
<svg style="left:653px;top:51px" width="14" height="642" viewBox="0 0 14 642"><path d="M3 10.500h7l-3.500-4zM3 631.500h7l-3.500 4z" fill="#000"/></svg>
<div class="a" style="left:0;top:693px;width:668px;height:19px;background:#f0f0f0"></div>
<div class="t" style="left:598px;top:698px;color:#000"><span class="s" style="transform:scaleX(0.9670)">Ln: 2&nbsp;&nbsp;&nbsp;Col: 0</span></div>
<div class="code" style="left:5px;top:52px"><div><span class="ln" style="transform:scaleX(0.9565)"><span class="k">import</span> etap</span></div><div><span class="ln" style="transform:scaleX(0.9548)"><span class="k">import</span> sqlite3</span></div><div><span class="ln" style="transform:scaleX(0.9271)"><span class="k">import</span> xml.etree.ElementTree <span class="k">as</span> ET</span></div><div><span class="ln" style="transform:scaleX(0.9507)"><span class="k">from</span> sqlite3 <span class="k">import</span> Error</span></div><div><span class="ln" style="transform:scaleX(0.9614)"><span class="k">import</span> matplotlib</span></div><div></div><div></div><div><span class="ln" style="transform:scaleX(0.9166)"><span class="b">print</span>(<span class="g">&quot;Connecting...&quot;</span>)</span></div><div><span class="ln" style="transform:scaleX(0.9234)">e = etap.etapClient()</span></div><div><span class="ln" style="transform:scaleX(0.9421)">e.connect(<span class="g">&quot;10.10.1.101&quot;</span>, 50000, <span class="g">&quot;Example-ANSI&quot;</span>)</span></div><div></div><div><span class="ln" style="transform:scaleX(0.9042)"><span class="c"># ping</span></span></div><div><span class="ln" style="transform:scaleX(0.9081)"><span class="b">print</span>(<span class="g">&quot;Pinging...&quot;</span>)</span></div><div><span class="ln" style="transform:scaleX(0.8933)">pingResult = e.ping()</span></div><div><span class="ln" style="transform:scaleX(0.9267)"><span class="b">print</span>(<span class="b">str</span>(pingResult))</span></div><div></div><div><span class="ln" style="transform:scaleX(0.8796)"><span class="c"># Run unbalanced LF</span></span></div><div><span class="ln" style="transform:scaleX(0.9003)"><span class="b">print</span>(<span class="g">&quot;Running ULF...&quot;</span>)</span></div><div><span class="ln" style="transform:scaleX(0.9164)">result = e.studies.runULF(<span class="g">&quot;Base&quot;</span>, <span class="g">&quot;Normal&quot;</span>, <span class="g">&quot;ULF&quot;</span>, <span class="g">&quot;Untitled&quot;</span>);</span></div><div><span class="ln" style="transform:scaleX(0.9534)"><span class="b">print</span>(result)</span></div><div></div><div><span class="ln" style="transform:scaleX(0.9464)"><span class="c"># Get path of the report</span></span></div><div><span class="ln" style="transform:scaleX(0.9488)">report_path = ET.fromstring(result).text</span></div><div></div><div><span class="ln" style="transform:scaleX(0.9201)"><span class="c"># Function definition: Create connection</span></span></div><div><span class="ln" style="transform:scaleX(0.8947)"><span class="k">def</span> <span class="d">create_connection</span>(db_file):</span></div><div style="padding-left:12px"><span class="ln" style="transform:scaleX(0.8992)">conn = <span class="k">None</span></span></div><div style="padding-left:12px"><span class="ln" style="transform:scaleX(1.0281)"><span class="k">try</span>:</span></div><div style="padding-left:23.75px"><span class="ln" style="transform:scaleX(0.9012)">conn = sqlite3.connect(db_file)</span></div><div style="padding-left:12px"><span class="ln" style="transform:scaleX(0.9116)"><span class="k">except</span> Error <span class="k">as</span> e:</span></div><div style="padding-left:23.75px"><span class="ln" style="transform:scaleX(0.9355)"><span class="b">print</span>(e)</span></div><div></div><div style="padding-left:12px"><span class="ln" style="transform:scaleX(0.9283)"><span class="k">return</span> conn</span></div><div></div><div></div><div><span class="ln" style="transform:scaleX(0.9103)"><span class="c"># Function definition: Get voltage magnitudes and angles of ABC phases</span></span></div><div><span class="ln" style="transform:scaleX(0.8916)"><span class="k">def</span> <span class="d">Va_mag</span>(conn):</span></div><div style="padding-left:12px"><span class="ln" style="transform:scaleX(0.8950)">cur = conn.cursor()</span></div><div style="padding-left:12px"><span class="ln" style="transform:scaleX(0.9150)">cur.execute(<span class="g">r&quot;SELECT voltmaga FROM lf3phr;&quot;</span>)</span></div><div style="padding-left:12px"><span class="ln" style="transform:scaleX(0.9239)">rows = cur.fetchall()</span></div></div>
</div>
<div class="a" style="left:1090px;top:945px;width:38px;height:2px;background:#e8a020"></div>
<div class="a" style="left:1801px;top:142px;width:58px;height:590px;border-radius:5px 5px 0 0;background:linear-gradient(90deg,#c9cdd3 0,#c4c8ce 35%,#b1b6bf 65%,#9a9fa9)"></div>
<div class="a" style="left:1801px;top:732px;width:58px;height:29px;border-radius:0 0 4px 0;background:linear-gradient(90deg,#c9cdd3 0,#c4c8ce 35%,#b1b6bf 65%,#9a9fa9)"></div>
<div class="a" style="left:1861px;top:142px;width:58px;height:468px;border-radius:5px 5px 0 0;background:linear-gradient(90deg,#c9cdd3 0,#c4c8ce 35%,#b1b6bf 65%,#9a9fa9)"></div>
<div class="a" style="left:1861px;top:610px;width:58px;height:11px;border-radius:0 0 5px 5px;background:linear-gradient(90deg,#c9cdd3 0,#c4c8ce 35%,#b1b6bf 65%,#9a9fa9)"></div>
<div class="a" style="left:1807px;top:146px;width:47px;height:3px;background:repeating-linear-gradient(90deg,#222 0,#222 2px,#fff 2px,#fff 3px,transparent 3px,transparent 4px)"></div>
<div class="a" style="left:1867px;top:146px;width:47px;height:3px;background:repeating-linear-gradient(90deg,#222 0,#222 2px,#fff 2px,#fff 3px,transparent 3px,transparent 4px)"></div>
<div class="a" style="left:1867px;top:351px;width:47px;height:3px;background:repeating-linear-gradient(90deg,#222 0,#222 2px,#fff 2px,#fff 3px,transparent 3px,transparent 4px)"></div>
<div class="a" style="left:1807px;top:156px;width:22px;height:22px;border-radius:2px;background:linear-gradient(#ffd28a,#ffb040 40%,#ffc468 60%,#ffe9b0);border:1px solid #e8c890"></div>
<div class="a" style="left:1807px;top:707px;width:22px;height:22px;border-radius:2px;background:linear-gradient(#ffeeb8,#ffe08a);border:1px solid #dcb850"></div>
<div class="a" style="left:1867px;top:361px;width:22px;height:22px;border-radius:2px;background:linear-gradient(#ffd28a,#ffb040 40%,#ffc468 60%,#ffe9b0);border:1px solid #e8c890"></div>
<svg style="left:1808.0px;top:157.0px" width="20" height="20" viewBox="0 0 20 20"><g transform="translate(10 10) scale(.9) translate(-10 -10)"><path d="M5 2l0 13 3.500-3 2.500 6 2-1-2.500-6 4.500 0z" fill="#fff" stroke="#1a1a9c" stroke-width="1.100"/></g></svg>
<svg style="left:1831.0px;top:157.0px" width="20" height="20" viewBox="0 0 20 20"><g transform="translate(10 10) scale(.9) translate(-10 -10)"><rect x="1" y="12" width="6" height="6" fill="#1a1a9c"/><path d="M4 12l7-9" stroke="#e01010" stroke-width="1.200"/><path d="M10 2l8 8-3.500 0 2 5-2 1-2-5-2.500 2z" fill="#e01010" stroke="#1a1a9c" stroke-width=".6"/></g></svg>
<svg style="left:1808.0px;top:180.0px" width="20" height="20" viewBox="0 0 20 20"><g transform="translate(10 10) scale(.9) translate(-10 -10)"><text x="10" y="10" font-size="9" fill="#1a1a9c" text-anchor="middle" font-family="Liberation Sans" font-weight="bold">BUS</text><path d="M2 13.500h16" stroke="#1a1a9c" stroke-width="2"/></g></svg>
<svg style="left:1831.0px;top:180.0px" width="20" height="20" viewBox="0 0 20 20"><g transform="translate(10 10) scale(.9) translate(-10 -10)"><circle cx="10" cy="6" r="3.200" fill="#1a1a9c"/><text x="10" y="17" font-size="6.500" fill="#1a1a9c" text-anchor="middle" font-family="Liberation Sans" font-weight="bold">Node</text></g></svg>
<svg style="left:1808.0px;top:203.0px" width="20" height="20" viewBox="0 0 20 20"><g transform="translate(10 10) scale(.9) translate(-10 -10)"><path d="M6 3c3 4 3 10 0 14M14 3c-3 4-3 10 0 14M10 1v18" stroke="#1a1a9c" stroke-width="1.100" fill="none"/><path d="M9 3v14M11 3v14" stroke="#8a8ac8" stroke-width=".8"/></g></svg>
<svg style="left:1831.0px;top:203.0px" width="20" height="20" viewBox="0 0 20 20"><g transform="translate(10 10) scale(.9) translate(-10 -10)"><path d="M5 3c3 4 3 10 0 14M15 3c-3 4-3 10 0 14M10 1v3l-3 2 6 3-6 3 6 3-3 2v2" stroke="#1a1a9c" stroke-width="1.100" fill="none"/></g></svg>
<svg style="left:1808.0px;top:226.0px" width="20" height="20" viewBox="0 0 20 20"><g transform="translate(10 10) scale(.9) translate(-10 -10)"><path d="M2 7c1.500 3 3 3 4 0 1.500 3 3 3 4 0 1.500 3 3 3 4 0 1.500 3 3 3 4 0M2 13c1.500-3 3-3 4 0 1.500-3 3-3 4 0 1.500-3 3-3 4 0 1.500-3 3-3 4 0M10 2v7M10 11v7" stroke="#1a1a9c" stroke-width="1.100" fill="none"/></g></svg>
<svg style="left:1831.0px;top:226.0px" width="20" height="20" viewBox="0 0 20 20"><g transform="translate(10 10) scale(.9) translate(-10 -10)"><path d="M2 7c1.500 3 3 3 4 0 1.500 3 3 3 4 0 1.500 3 3 3 4 0 1.500 3 3 3 4 0M10 2v7M3 14c1-3 3-3 4 0M12 14c1-3 3-3 4 0M5 13v6M14 13v6" stroke="#1a1a9c" stroke-width="1.100" fill="none"/></g></svg>
<svg style="left:1808.0px;top:249.0px" width="20" height="20" viewBox="0 0 20 20"><g transform="translate(10 10) scale(.9) translate(-10 -10)"><path d="M4 7c1.500 3 3 3 4 0 1.500 3 3 3 4 0 1.500 3 3 3 4 0M4 13c1.500-3 3-3 4 0 1.500-3 3-3 4 0 1.500-3 3-3 4 0M10 2v7M10 11v7M1 6l4 4-4 4" stroke="#1a1a9c" stroke-width="1.100" fill="none"/></g></svg>
<svg style="left:1831.0px;top:249.0px" width="20" height="20" viewBox="0 0 20 20"><g transform="translate(10 10) scale(.9) translate(-10 -10)"><path d="M2 7c1.500 3 3 3 4 0 1.500 3 3 3 4 0 1.500 3 3 3 4 0 1.500 3 3 3 4 0M10 2v7M10 12v7M7 15l3-3 3 3" stroke="#1a1a9c" stroke-width="1.100" fill="none"/></g></svg>
<svg style="left:1808.0px;top:272.0px" width="20" height="20" viewBox="0 0 20 20"><g transform="translate(10 10) scale(.9) translate(-10 -10)"><path d="M2 16h3c3 0 3-9 5-9s2 4 3.500 6 2.500 3 4.500 3" stroke="#1a1a9c" stroke-width="1.100" fill="none"/></g></svg>
<svg style="left:1831.0px;top:272.0px" width="20" height="20" viewBox="0 0 20 20"><g transform="translate(10 10) scale(.9) translate(-10 -10)"><path d="M9 2v13M9 4h2M9 7h2M9 10h2M3 15c1.500 3 3 3 4 0 1.500 3 3 3 4 0 1.500 3 3 3 4 0" stroke="#1a1a9c" stroke-width="1.100" fill="none"/></g></svg>
<svg style="left:1808.0px;top:295.0px" width="20" height="20" viewBox="0 0 20 20"><g transform="translate(10 10) scale(.9) translate(-10 -10)"><rect x="2" y="5" width="12" height="10" rx="3" fill="#1a1a9c"/><ellipse cx="14" cy="10" rx="3" ry="5" fill="#10a8f0"/><ellipse cx="15" cy="10" rx="2" ry="3.500" fill="#40d0ff"/></g></svg>
<svg style="left:1831.0px;top:295.0px" width="20" height="20" viewBox="0 0 20 20"><g transform="translate(10 10) scale(.9) translate(-10 -10)"><path d="M10 1v17M6 18h8" stroke="#1a1a9c" stroke-width="1.400"/><path d="M2 6c5-3 11-3 16 0M2 9c5-3 11-3 16 0M2 12c5-3 11-3 16 0" stroke="#c02020" stroke-width="1.100" fill="none"/></g></svg>
<svg style="left:1808.0px;top:318.0px" width="20" height="20" viewBox="0 0 20 20"><g transform="translate(10 10) scale(.9) translate(-10 -10)"><path d="M10 1v3c-4 1-4 2 0 3-4 1-4 2 0 3-4 1-4 2 0 3v3" stroke="#1a1a9c" stroke-width="1.100" fill="none"/><path d="M12 4v10" stroke="#1a1a9c"/></g></svg>
<svg style="left:1831.0px;top:318.0px" width="20" height="20" viewBox="0 0 20 20"><g transform="translate(10 10) scale(.9) translate(-10 -10)"><path d="M10 1v3l-3 1.500 6 2.500-6 2.500 6 2.500-3 1.500v3" stroke="#1a1a9c" stroke-width="1.100" fill="none"/></g></svg>
<svg style="left:1808.0px;top:341.0px" width="20" height="20" viewBox="0 0 20 20"><g transform="translate(10 10) scale(.9) translate(-10 -10)"><path d="M2 3h16l-8 10zM10 13v6" stroke="#1a1a9c" stroke-width="1.100" fill="none"/><path d="M5 3l7.500 7M9 3l5.500 5M13 3l3 3M15 3l-7.500 7M11 3l-5.500 5M7 3L4 6" stroke="#1a1a9c" stroke-width=".7"/></g></svg>
<svg style="left:1831.0px;top:341.0px" width="20" height="20" viewBox="0 0 20 20"><g transform="translate(10 10) scale(.9) translate(-10 -10)"><circle cx="10" cy="10" r="7.500" stroke="#1a1a9c" stroke-width="1.100" fill="none"/><path d="M10 10V3M10 10l-6 4M10 10l6 4" stroke="#1a1a9c" stroke-width="1.100" fill="none"/></g></svg>
<svg style="left:1808.0px;top:364.0px" width="20" height="20" viewBox="0 0 20 20"><g transform="translate(10 10) scale(.9) translate(-10 -10)"><path d="M10 10V1M10 10l-8 6M10 10l8 6M10 10v9" stroke="#111" stroke-width="1.500" fill="none"/></g></svg>
<svg style="left:1831.0px;top:364.0px" width="20" height="20" viewBox="0 0 20 20"><g transform="translate(10 10) scale(.9) translate(-10 -10)"><rect x="2" y="3" width="16" height="14" fill="#e8ecf8" stroke="#1a1a9c" stroke-width="1.100"/><path d="M2 6.500h16M2 10h16M6 3v7M10 3v7M14 3v7" stroke="#1a1a9c" stroke-width=".8"/><path d="M4 14c1.500-3 3-3 4.500 0s3 3 4.500 0M15 12v1M15 15v1" stroke="#1a1a9c" stroke-width="1.100" fill="none"/></g></svg>
<svg style="left:1808.0px;top:387.0px" width="20" height="20" viewBox="0 0 20 20"><g transform="translate(10 10) scale(.9) translate(-10 -10)"><circle cx="10" cy="10" r="7.300" fill="#fff" stroke="#111" stroke-width="1.100"/><path d="M10 1v2" stroke="#111"/><text x="10" y="13.200" font-size="9" fill="#111" text-anchor="middle" font-family="Liberation Sans" font-weight="bold">M</text></g></svg>
<svg style="left:1831.0px;top:387.0px" width="20" height="20" viewBox="0 0 20 20"><g transform="translate(10 10) scale(.9) translate(-10 -10)"><circle cx="10" cy="10" r="7.300" fill="#fff" stroke="#111" stroke-width="1.100"/><path d="M10 1v2M17 5c2 1 2 2 0 3 2 1 2 2 0 3 2 1 2 2 0 3" stroke="#111" fill="none"/><text x="10" y="13.200" font-size="9" fill="#111" text-anchor="middle" font-family="Liberation Sans" font-weight="bold">M</text></g></svg>
<svg style="left:1808.0px;top:410.0px" width="20" height="20" viewBox="0 0 20 20"><g transform="translate(10 10) scale(.9) translate(-10 -10)"><circle cx="10" cy="11" r="7.500" fill="#fff" stroke="#1a1a9c" stroke-width="1.100"/><path d="M2.500 11h15M5 14l5 3 5-3z" fill="#50a0e8" stroke="#1a1a9c" stroke-width=".8"/><path d="M10 1v3" stroke="#1a1a9c"/></g></svg>
<svg style="left:1831.0px;top:410.0px" width="20" height="20" viewBox="0 0 20 20"><g transform="translate(10 10) scale(.9) translate(-10 -10)"><circle cx="10" cy="11" r="7.500" fill="#fff" stroke="#1a1a9c" stroke-width="1.100"/><path d="M5 6l10 10M15 6L5 16M10 1v3" stroke="#1a1a9c" stroke-width="1.100" fill="none"/></g></svg>
<svg style="left:1808.0px;top:433.0px" width="20" height="20" viewBox="0 0 20 20"><g transform="translate(10 10) scale(.9) translate(-10 -10)"><path d="M10 1v8" stroke="#1a1a9c"/><path d="M3 9h14l-7 8z" fill="#70b0f0" stroke="#1a1a9c" stroke-width=".9"/></g></svg>
<svg style="left:1831.0px;top:433.0px" width="20" height="20" viewBox="0 0 20 20"><g transform="translate(10 10) scale(.9) translate(-10 -10)"><path d="M10 1v7M3 8h14M3 12c4-2 10-2 14 0M10 11v8" stroke="#1a1a9c" stroke-width="1.100" fill="none"/></g></svg>
<svg style="left:1808.0px;top:456.0px" width="20" height="20" viewBox="0 0 20 20"><g transform="translate(10 10) scale(.9) translate(-10 -10)"><rect x="2.500" y="3.500" width="15" height="13" fill="#e0e8f8" stroke="#1a1a9c" stroke-width="1.100"/><path d="M4 7c2-2 4 2 6 0s4 2 6 0M4 10c2-2 4 2 6 0s4 2 6 0M4 13c2-2 4 2 6 0s4 2 6 0" stroke="#2060c0" fill="none"/><path d="M10 1v2.500M10 16.500V19" stroke="#1a1a9c"/></g></svg>
<svg style="left:1831.0px;top:456.0px" width="20" height="20" viewBox="0 0 20 20"><g transform="translate(10 10) scale(.9) translate(-10 -10)"><path d="M10 1v6M4 7h12M4 10c4-2 8-2 12 0M10 9v3c-2 1-2 2 0 3s2 2 0 3" stroke="#1a1a9c" stroke-width="1.100" fill="none"/></g></svg>
<svg style="left:1808.0px;top:479.0px" width="20" height="20" viewBox="0 0 20 20"><g transform="translate(10 10) scale(.9) translate(-10 -10)"><path d="M10 1v18" stroke="#111" stroke-width="1"/><path d="M2 8c3-3 5 2 8 0s5-3 8 0M2 13c3-3 5 2 8 0s5-3 8 0" stroke="#111" stroke-width="1.200" fill="none"/></g></svg>
<svg style="left:1831.0px;top:479.0px" width="20" height="20" viewBox="0 0 20 20"><g transform="translate(10 10) scale(.9) translate(-10 -10)"><path d="M11 1l-3 6 3 1-4 7M9 16l4-4M13 5l-4 9" stroke="#1a1a9c" stroke-width="1.600" fill="none"/><circle cx="10" cy="12" r="2" fill="#111"/></g></svg>
<svg style="left:1808.0px;top:502.0px" width="20" height="20" viewBox="0 0 20 20"><g transform="translate(10 10) scale(.9) translate(-10 -10)"><rect x="3" y="4" width="14" height="13" fill="#d8d8d8" stroke="#444" stroke-width="1.100"/><path d="M5 7h10M6 9.500h8M7 12h6M8 14.500h4" stroke="#1a1a9c" stroke-width="1"/><path d="M10 1v3" stroke="#444"/></g></svg>
<svg style="left:1831.0px;top:502.0px" width="20" height="20" viewBox="0 0 20 20"><g transform="translate(10 10) scale(.9) translate(-10 -10)"><circle cx="10" cy="10" r="7.500" fill="#b8d8d8" stroke="#445" stroke-width="1.100"/><circle cx="10" cy="10" r="4" fill="#10908c"/><circle cx="10" cy="10" r="1.500" fill="#d0f0f0"/></g></svg>
<svg style="left:1808.0px;top:525.0px" width="20" height="20" viewBox="0 0 20 20"><g transform="translate(10 10) scale(.9) translate(-10 -10)"><path d="M10 19v-6M5 13h10M5 10.500h10M10 10.500V7M6 16h8" stroke="#1a1a9c" stroke-width="1.100" fill="none"/><path d="M6 11l8-8M14 3l-3.500.5 3 3z" stroke="#e01010" stroke-width="1.200" fill="#e01010"/></g></svg>
<svg style="left:1831.0px;top:525.0px" width="20" height="20" viewBox="0 0 20 20"><g transform="translate(10 10) scale(.9) translate(-10 -10)"><path d="M10 1v18M3 6h14M3 14h14" stroke="#1a1a9c" stroke-width="1.100" fill="none"/><path d="M4 6l3 4 3-4zM10 6l3 4 3-4zM4 14l3-4 3 4zM10 14l3-4 3 4z" fill="none" stroke="#1a1a9c" stroke-width=".9"/></g></svg>
<svg style="left:1808.0px;top:548.0px" width="20" height="20" viewBox="0 0 20 20"><g transform="translate(10 10) scale(.9) translate(-10 -10)"><rect x="3" y="2.500" width="14" height="12" fill="#e8e8e8" stroke="#777" stroke-width="1"/><rect x="6" y="5" width="8" height="7" rx="1.500" fill="#fff" stroke="#1a1a9c" stroke-width="1"/><path d="M5 8.500h1.500M13.500 8.500H15M10 14.500v3M6 18h8" stroke="#777"/></g></svg>
<svg style="left:1808.0px;top:571.0px" width="20" height="20" viewBox="0 0 20 20"><g transform="translate(10 10) scale(.9) translate(-10 -10)"><rect x="1.500" y="1.500" width="17" height="17" fill="#e8ecf8" stroke="#1a1a9c" stroke-width="1.100"/><circle cx="10" cy="10" r="6.500" fill="#fff" stroke="#1a1a9c" stroke-width="1.100"/><text x="10" y="13.300" font-size="9" fill="#1a1a9c" text-anchor="middle" font-family="Liberation Sans" font-weight="bold">M</text></g></svg>
<svg style="left:1831.0px;top:571.0px" width="20" height="20" viewBox="0 0 20 20"><g transform="translate(10 10) scale(.9) translate(-10 -10)"><rect x="1.500" y="1.500" width="17" height="17" fill="#e8ecf8" stroke="#1a1a9c" stroke-width="1.100"/><rect x="4" y="4" width="12" height="12" fill="#8890c8" stroke="#1a1a9c" stroke-width=".8"/><path d="M4 4l12 12M16 4L4 16M4 10l6-6 6 6-6 6zM7 4v12M13 4v12M4 7h12M4 13h12" stroke="#1a1a9c" stroke-width=".6"/></g></svg>
<svg style="left:1808.0px;top:594.0px" width="20" height="20" viewBox="0 0 20 20"><g transform="translate(10 10) scale(.9) translate(-10 -10)"><rect x="7.500" y="4" width="5" height="12" fill="#e8ecf8" stroke="#1a1a9c" stroke-width="1.100"/><path d="M10 1v18" stroke="#1a1a9c"/></g></svg>
<svg style="left:1831.0px;top:594.0px" width="20" height="20" viewBox="0 0 20 20"><g transform="translate(10 10) scale(.9) translate(-10 -10)"><path d="M10 1v7M4 8h12M4 12h12M10 12v7" stroke="#1a1a9c" stroke-width="1.100" fill="none"/></g></svg>
<svg style="left:1808.0px;top:617.0px" width="20" height="20" viewBox="0 0 20 20"><g transform="translate(10 10) scale(.9) translate(-10 -10)"><rect x="6" y="6" width="8" height="8" fill="#f0f0f8" stroke="#1a1a9c" stroke-width="1.100"/><path d="M10 1v5M10 14v5" stroke="#1a1a9c"/></g></svg>
<svg style="left:1831.0px;top:617.0px" width="20" height="20" viewBox="0 0 20 20"><g transform="translate(10 10) scale(.9) translate(-10 -10)"><path d="M10 1v4M10 15v4M9 5c6 2 6 8 0 10" stroke="#1a1a9c" stroke-width="1.100" fill="none" stroke-dasharray="3 1"/></g></svg>
<svg style="left:1808.0px;top:640.0px" width="20" height="20" viewBox="0 0 20 20"><g transform="translate(10 10) scale(.9) translate(-10 -10)"><rect x="2.500" y="3.500" width="15" height="13" fill="#dfe3f2" stroke="#1a1a9c" stroke-width="1.100"/><path d="M10 1v2.500M10 16.500V19" stroke="#1a1a9c"/><text x="10" y="13.300" font-size="8.5" fill="#1a1a9c" text-anchor="middle" font-family="Liberation Sans" font-weight="bold">79</text></g></svg>
<svg style="left:1831.0px;top:640.0px" width="20" height="20" viewBox="0 0 20 20"><g transform="translate(10 10) scale(.9) translate(-10 -10)"><circle cx="4" cy="8" r="1.500" stroke="#1a1a9c" stroke-width="1.100" fill="none"/><path d="M5.500 9l6 3M12 6v8M14.500 7v6M17 8v4" stroke="#1a1a9c" stroke-width="1.100" fill="none"/></g></svg>
<svg style="left:1808.0px;top:663.0px" width="20" height="20" viewBox="0 0 20 20"><g transform="translate(10 10) scale(.9) translate(-10 -10)"><path d="M10 1v3c5 1 5 5 0 6-5 1-5 5 0 6v3M7 3c1 3 4 5 6 6M13 11c-2 1-5 3-6 6" stroke="#1a1a9c" stroke-width="1.100" fill="none"/></g></svg>
<svg style="left:1831.0px;top:663.0px" width="20" height="20" viewBox="0 0 20 20"><g transform="translate(10 10) scale(.9) translate(-10 -10)"><rect x="2.500" y="3.500" width="15" height="13" fill="#dfe3f2" stroke="#1a1a9c" stroke-width="1.100"/><path d="M10 1v2.500M10 16.500V19" stroke="#1a1a9c"/><text x="10" y="13.300" font-size="8.5" fill="#1a1a9c" text-anchor="middle" font-family="Liberation Sans" font-weight="bold">49</text></g></svg>
<svg style="left:1808.0px;top:686.0px" width="20" height="20" viewBox="0 0 20 20"><g transform="translate(10 10) scale(.9) translate(-10 -10)"><path d="M10 1v4M10 15v4M10 14l3-8" stroke="#1a1a9c" stroke-width="1.100" fill="none"/><circle cx="10" cy="5.500" r="1.300" stroke="#1a1a9c" stroke-width="1.100" fill="none"/><circle cx="10" cy="14.500" r="1.300" stroke="#1a1a9c" stroke-width="1.100" fill="none"/></g></svg>
<svg style="left:1831.0px;top:686.0px" width="20" height="20" viewBox="0 0 20 20"><g transform="translate(10 10) scale(.9) translate(-10 -10)"><circle cx="5" cy="15" r="1.300" stroke="#1a1a9c" stroke-width="1.100" fill="none"/><circle cx="11" cy="4" r="1.300" stroke="#1a1a9c" stroke-width="1.100" fill="none"/><circle cx="16" cy="15" r="1.300" stroke="#1a1a9c" stroke-width="1.100" fill="none"/><path d="M5 14l6-9M11 1v2M16 16v3M5 16v3" stroke="#1a1a9c" stroke-width="1.100" fill="none"/></g></svg>
<svg style="left:1808.0px;top:709.0px" width="20" height="20" viewBox="0 0 20 20"><g transform="translate(10 10) scale(.9) translate(-10 -10)"><circle cx="6.500" cy="4.500" r="1.600" fill="#8a7a10"/><circle cx="13.500" cy="4.500" r="1.600" fill="#8a7a10"/><circle cx="6.500" cy="10" r="1.600" fill="#8a7a10"/><circle cx="13.500" cy="10" r="1.600" fill="#8a7a10"/><circle cx="6.500" cy="15.500" r="1.600" fill="#8a7a10"/><circle cx="13.500" cy="15.500" r="1.600" fill="#8a7a10"/></g></svg>
<svg style="left:1831.0px;top:709.0px" width="20" height="20" viewBox="0 0 20 20"><g transform="translate(10 10) scale(.9) translate(-10 -10)"><path d="M5 5h14l-4 6H1zM9.500 5l-4 6M14 5l-4 6M3 8h14" stroke="#1a1a9c" stroke-width="1.100" fill="none"/><path d="M2 11v5M5 11v7M8 11v5M11 11v7M14 11v5" stroke="#1a1a9c" stroke-width=".8"/></g></svg>
<svg style="left:1808.0px;top:732.0px" width="20" height="20" viewBox="0 0 20 20"><g transform="translate(10 10) scale(.9) translate(-10 -10)"><rect x="2" y="2" width="16" height="12" rx="1" fill="#4a98d8" stroke="#446" stroke-width="1"/><rect x="4" y="4" width="12" height="8" fill="#b8dcf4"/><circle cx="10" cy="8" r="2.500" fill="none" stroke="#fff" stroke-width="1.200"/><path d="M7 14h6l1 3H6z" fill="#889"/><path d="M4 18h12" stroke="#556" stroke-width="1.400"/></g></svg>
<svg style="left:1831.0px;top:732.0px" width="20" height="20" viewBox="0 0 20 20"><g transform="translate(10 10) scale(.9) translate(-10 -10)"><rect x="3" y="1.500" width="14" height="17" rx="1.500" fill="#3a78d0" stroke="#1a4aa0" stroke-width="1"/><rect x="8" y="4" width="6" height="2.500" fill="#cfe4ff"/><path d="M5 1.500v17" stroke="#1a4aa0" stroke-width="1"/></g></svg>
<svg style="left:1868.0px;top:157.0px" width="20" height="20" viewBox="0 0 20 20"><g transform="translate(10 10) scale(.9) translate(-10 -10)"><path d="M10 2v16M3 10h14" stroke="#a020a0" stroke-width="1.100"/><path d="M10 3c-6 0-6 7 0 7-6 0-6 7 0 7" stroke="#a020a0" stroke-width="1.200" fill="none"/></g></svg>
<svg style="left:1891.0px;top:157.0px" width="20" height="20" viewBox="0 0 20 20"><g transform="translate(10 10) scale(.9) translate(-10 -10)"><path d="M3 4c3 0 4 6 7 6s4-6 7-6M3 16c3 0 4-6 7-6s4 6 7 6M2 10h16" stroke="#1a1a9c" stroke-width="1.100" fill="none"/></g></svg>
<svg style="left:1868.0px;top:180.0px" width="20" height="20" viewBox="0 0 20 20"><g transform="translate(10 10) scale(.9) translate(-10 -10)"><circle cx="10" cy="10" r="7.300" fill="#fff" stroke="#1a1a9c" stroke-width="1.100"/><path d="M1.500 10h1.500" stroke="#1a1a9c"/><text x="10" y="13.200" font-size="10" fill="#1a1a9c" text-anchor="middle" font-family="Liberation Sans" font-weight="bold">V</text></g></svg>
<svg style="left:1891.0px;top:180.0px" width="20" height="20" viewBox="0 0 20 20"><g transform="translate(10 10) scale(.9) translate(-10 -10)"><circle cx="10" cy="10" r="7.300" fill="#fff" stroke="#1a1a9c" stroke-width="1.100"/><path d="M1.500 10h1.500" stroke="#1a1a9c"/><text x="10" y="13.200" font-size="10" fill="#1a1a9c" text-anchor="middle" font-family="Liberation Sans" font-weight="bold">A</text></g></svg>
<svg style="left:1868.0px;top:203.0px" width="20" height="20" viewBox="0 0 20 20"><g transform="translate(10 10) scale(.9) translate(-10 -10)"><rect x="2.500" y="2.500" width="15" height="15" fill="#e8ecf8" stroke="#1a1a9c" stroke-width="1.100"/><path d="M4 10a7 7 0 0 1 12-3" stroke="#c02020" fill="none"/><path d="M9 15l5-7" stroke="#111" stroke-width="1.400"/><path d="M.5 10h2" stroke="#1a1a9c"/></g></svg>
<svg style="left:1891.0px;top:203.0px" width="20" height="20" viewBox="0 0 20 20"><g transform="translate(10 10) scale(.9) translate(-10 -10)"><rect x="2.500" y="3" width="15" height="14" fill="#d0d0dc" stroke="#9a90b8" stroke-width="1"/><text x="10" y="13.500" font-size="8" fill="#c87070" text-anchor="middle" font-family="Liberation Sans" font-weight="bold">CPT</text></g></svg>
<svg style="left:1868.0px;top:226.0px" width="20" height="20" viewBox="0 0 20 20"><g transform="translate(10 10) scale(.9) translate(-10 -10)"><circle cx="10" cy="10" r="7.300" fill="#fff" stroke="#1a1a9c" stroke-width="1.100"/><path d="M1.500 10h1.500" stroke="#1a1a9c"/><text x="10" y="13.200" font-size="8.5" fill="#1a1a9c" text-anchor="middle" font-family="Liberation Sans" font-weight="bold">27</text></g></svg>
<svg style="left:1891.0px;top:226.0px" width="20" height="20" viewBox="0 0 20 20"><g transform="translate(10 10) scale(.9) translate(-10 -10)"><circle cx="10" cy="10" r="7.300" fill="#fff" stroke="#1a1a9c" stroke-width="1.100"/><path d="M1.500 10h1.500" stroke="#1a1a9c"/><text x="10" y="13.200" font-size="8.5" fill="#1a1a9c" text-anchor="middle" font-family="Liberation Sans" font-weight="bold">32</text></g></svg>
<svg style="left:1868.0px;top:249.0px" width="20" height="20" viewBox="0 0 20 20"><g transform="translate(10 10) scale(.9) translate(-10 -10)"><circle cx="10" cy="10" r="7.300" fill="#fff" stroke="#1a1a9c" stroke-width="1.100"/><path d="M1.500 10h1.500" stroke="#1a1a9c"/><text x="10" y="13.200" font-size="8.5" fill="#1a1a9c" text-anchor="middle" font-family="Liberation Sans" font-weight="bold">81</text></g></svg>
<svg style="left:1891.0px;top:249.0px" width="20" height="20" viewBox="0 0 20 20"><g transform="translate(10 10) scale(.9) translate(-10 -10)"><circle cx="10" cy="10" r="7.300" fill="#fff" stroke="#1a1a9c" stroke-width="1.100"/><path d="M1.500 10h1.500" stroke="#1a1a9c"/><text x="10" y="13.200" font-size="7" fill="#1a1a9c" text-anchor="middle" font-family="Liberation Sans" font-weight="bold">S<tspan font-size="5.500" dy="1.500">ST</tspan></text></g></svg>
<svg style="left:1868.0px;top:272.0px" width="20" height="20" viewBox="0 0 20 20"><g transform="translate(10 10) scale(.9) translate(-10 -10)"><circle cx="10" cy="10" r="7.300" fill="#fff" stroke="#1a1a9c" stroke-width="1.100"/><path d="M1.500 10h1.500" stroke="#1a1a9c"/><text x="10" y="13.200" font-size="7.5" fill="#1a1a9c" text-anchor="middle" font-family="Liberation Sans" font-weight="bold">MR</text></g></svg>
<svg style="left:1891.0px;top:272.0px" width="20" height="20" viewBox="0 0 20 20"><g transform="translate(10 10) scale(.9) translate(-10 -10)"><circle cx="10" cy="10" r="7.300" fill="#fff" stroke="#1a1a9c" stroke-width="1.100"/><path d="M1.500 10h1.500" stroke="#1a1a9c"/><text x="10" y="13.200" font-size="7" fill="#1a1a9c" text-anchor="middle" font-family="Liberation Sans" font-weight="bold">O<tspan font-size="5.500" dy="1">C</tspan><tspan font-size="6.500" dy="1.500">R</tspan></text></g></svg>
<svg style="left:1868.0px;top:295.0px" width="20" height="20" viewBox="0 0 20 20"><g transform="translate(10 10) scale(.9) translate(-10 -10)"><circle cx="10" cy="10" r="7.300" fill="#fff" stroke="#1a1a9c" stroke-width="1.100"/><path d="M1.500 10h1.500" stroke="#1a1a9c"/><text x="10" y="13.200" font-size="8.5" fill="#1a1a9c" text-anchor="middle" font-family="Liberation Sans" font-weight="bold">87</text></g></svg>
<svg style="left:1891.0px;top:295.0px" width="20" height="20" viewBox="0 0 20 20"><g transform="translate(10 10) scale(.9) translate(-10 -10)"><circle cx="10" cy="10" r="7.300" fill="#fff" stroke="#1a1a9c" stroke-width="1.100"/><path d="M1.500 10h1.500" stroke="#1a1a9c"/><text x="10" y="13.200" font-size="10" fill="#1a1a9c" text-anchor="middle" font-family="Liberation Sans" font-weight="bold">R</text></g></svg>
<svg style="left:1868.0px;top:318.0px" width="20" height="20" viewBox="0 0 20 20"><g transform="translate(10 10) scale(.9) translate(-10 -10)"><circle cx="10" cy="10" r="7.300" fill="#fff" stroke="#1a1a9c" stroke-width="1.100"/><path d="M1.500 10h1.500" stroke="#1a1a9c"/><text x="10" y="13.200" font-size="8.5" fill="#1a1a9c" text-anchor="middle" font-family="Liberation Sans" font-weight="bold">21</text></g></svg>
<svg style="left:1891.0px;top:318.0px" width="20" height="20" viewBox="0 0 20 20"><g transform="translate(10 10) scale(.9) translate(-10 -10)"><circle cx="10" cy="10" r="8" fill="#c8ccd8" stroke="#1a1a9c" stroke-width="1.100"/><path d="M4.500 8a6.500 6.500 0 0 1 11 0" stroke="#20a040" stroke-width="1.600" fill="none"/><path d="M7 5l4.500 9" stroke="#c01010" stroke-width="1.100"/><circle cx="11.500" cy="14" r="1.600" fill="#e01010"/></g></svg>
<svg style="left:1868.0px;top:362.0px" width="20" height="20" viewBox="0 0 20 20"><g transform="translate(10 10) scale(.9) translate(-10 -10)"><path d="M5 2l0 13 3.500-3 2.500 6 2-1-2.500-6 4.500 0z" fill="#ff9a20" stroke="#7a1a00" stroke-width="1"/></g></svg>
<svg style="left:1891.0px;top:362.0px" width="20" height="20" viewBox="0 0 20 20"><g transform="translate(10 10) scale(.9) translate(-10 -10)"><text x="10" y="10" font-size="9" fill="#2020e0" text-anchor="middle" font-family="Liberation Sans" font-weight="bold">BUS</text><path d="M2 13.500h16" stroke="#2020e0" stroke-width="2"/></g></svg>
<svg style="left:1868.0px;top:385.0px" width="20" height="20" viewBox="0 0 20 20"><g transform="translate(10 10) scale(.9) translate(-10 -10)"><rect x="7" y="3" width="6" height="14" rx="3" fill="#f4f4ff" stroke="#2020e0" stroke-width="1.100"/><path d="M10 1v2M10 17v2" stroke="#2020e0"/></g></svg>
<svg style="left:1891.0px;top:385.0px" width="20" height="20" viewBox="0 0 20 20"><g transform="translate(10 10) scale(.9) translate(-10 -10)"><path d="M10 1v3l-3 1.500 6 2.500-6 2.500 6 2.500-3 1.500v3" stroke="#2020e0" stroke-width="1.100" fill="none"/></g></svg>
<svg style="left:1868.0px;top:408.0px" width="20" height="20" viewBox="0 0 20 20"><g transform="translate(10 10) scale(.9) translate(-10 -10)"><rect x="3" y="3.500" width="14" height="13" fill="#f4f4ff" stroke="#2020e0" stroke-width="1.100"/><path d="M6 8.500h8M6 11.500h8" stroke="#a01010" stroke-width="1.500"/><path d="M10 1v2.500M10 16.500V19" stroke="#2020e0"/></g></svg>
<svg style="left:1868.0px;top:431.0px" width="20" height="20" viewBox="0 0 20 20"><g transform="translate(10 10) scale(.9) translate(-10 -10)"><rect x="2.500" y="3" width="15" height="14" fill="#f4f4ff" stroke="#555" stroke-width="1.100"/><path d="M5 7h10M7 10h6M5 13h10M10 3v4M10 13v4" stroke="#2020e0" stroke-width="1.100" fill="none"/></g></svg>
<svg style="left:1891.0px;top:431.0px" width="20" height="20" viewBox="0 0 20 20"><g transform="translate(10 10) scale(.9) translate(-10 -10)"><rect x="2" y="2.500" width="16" height="15" fill="#9098e0" stroke="#1a1a9c" stroke-width="1"/><path d="M2 6h16M2 9.500h16M2 13h16M5.500 2.500v15M9 2.500v15M12.500 2.500v15M15.500 2.500v15" stroke="#1a1a9c" stroke-width=".8"/></g></svg>
<svg style="left:1868.0px;top:454.0px" width="20" height="20" viewBox="0 0 20 20"><g transform="translate(10 10) scale(.9) translate(-10 -10)"><circle cx="10" cy="10" r="7.500" fill="#f4f4ff" stroke="#2020e0" stroke-width="1.100"/><text x="10" y="13.300" font-size="9" fill="#b01010" text-anchor="middle" font-family="Liberation Sans" font-weight="bold">M</text><path d="M10 0v2.500M10 17.500V20" stroke="#2020e0"/></g></svg>
<svg style="left:1891.0px;top:454.0px" width="20" height="20" viewBox="0 0 20 20"><g transform="translate(10 10) scale(.9) translate(-10 -10)"><path d="M10 1v5M4 6h12l-6 8zM6 15h8M8 17.500h4" stroke="#2020e0" stroke-width="1.100" fill="none"/><path d="M4 6h12l-6 8z" fill="#f4f4ff"/></g></svg>
<svg style="left:1868.0px;top:477.0px" width="20" height="20" viewBox="0 0 20 20"><g transform="translate(10 10) scale(.9) translate(-10 -10)"><rect x="3" y="3.500" width="14" height="13" fill="#e8ecff" stroke="#2020e0" stroke-width="1.100"/><path d="M6 7h8l-4 6z" stroke="#2020e0" stroke-width="1.100" fill="none"/><path d="M10 1v2.500" stroke="#2020e0"/></g></svg>
<svg style="left:1891.0px;top:477.0px" width="20" height="20" viewBox="0 0 20 20"><g transform="translate(10 10) scale(.9) translate(-10 -10)"><rect x="3" y="4" width="14" height="13" fill="#e8ecff" stroke="#2020e0" stroke-width="1.100"/><path d="M3 7.500h14M3 10.500h14M3 13.500h14M10 1v3" stroke="#2020e0" stroke-width="1.100" fill="none"/></g></svg>
<svg style="left:1868.0px;top:500.0px" width="20" height="20" viewBox="0 0 20 20"><g transform="translate(10 10) scale(.9) translate(-10 -10)"><rect x="1.500" y="1.500" width="17" height="17" fill="#e8ecff" stroke="#2020e0" stroke-width="1.100"/><circle cx="10" cy="10" r="6.500" fill="#fff" stroke="#2020e0" stroke-width="1.100"/><text x="10" y="13.300" font-size="9" fill="#b01010" text-anchor="middle" font-family="Liberation Sans" font-weight="bold">M</text></g></svg>
<svg style="left:1891.0px;top:500.0px" width="20" height="20" viewBox="0 0 20 20"><g transform="translate(10 10) scale(.9) translate(-10 -10)"><rect x="1.500" y="1.500" width="17" height="17" fill="#e8ecff" stroke="#1a1a9c" stroke-width="1.100"/><rect x="4" y="4" width="12" height="12" fill="#b0b8e8" stroke="#1a1a9c" stroke-width=".8"/><path d="M4 4l12 12M16 4L4 16M4 10l6-6 6 6-6 6z" stroke="#1a1a9c" stroke-width=".9" fill="none"/></g></svg>
<svg style="left:1868.0px;top:523.0px" width="20" height="20" viewBox="0 0 20 20"><g transform="translate(10 10) scale(.9) translate(-10 -10)"><rect x="5.500" y="5.500" width="9" height="9" fill="#f4f4ff" stroke="#2020e0" stroke-width="1.100"/><path d="M10 1v4.500M10 14.500V19" stroke="#2020e0"/></g></svg>
<svg style="left:1891.0px;top:523.0px" width="20" height="20" viewBox="0 0 20 20"><g transform="translate(10 10) scale(.9) translate(-10 -10)"><rect x="7.500" y="4" width="5" height="12" fill="#f4f4ff" stroke="#2020e0" stroke-width="1.100"/><path d="M10 1v18" stroke="#2020e0"/></g></svg>
<svg style="left:1868.0px;top:546.0px" width="20" height="20" viewBox="0 0 20 20"><g transform="translate(10 10) scale(.9) translate(-10 -10)"><path d="M10 1v4M10 15v4M10 14l3-8" stroke="#2020e0" stroke-width="1.100" fill="none"/><circle cx="10" cy="5.500" r="1.300" stroke="#2020e0" stroke-width="1.100" fill="none"/><circle cx="10" cy="14.500" r="1.300" stroke="#2020e0" stroke-width="1.100" fill="none"/></g></svg>
<svg style="left:1891.0px;top:546.0px" width="20" height="20" viewBox="0 0 20 20"><g transform="translate(10 10) scale(.9) translate(-10 -10)"><circle cx="5" cy="15" r="1.300" stroke="#2020e0" stroke-width="1.100" fill="none"/><circle cx="11" cy="4" r="1.300" stroke="#2020e0" stroke-width="1.100" fill="none"/><circle cx="16" cy="15" r="1.300" stroke="#2020e0" stroke-width="1.100" fill="none"/><path d="M5 14l6-9M11 1v2M16 16v3M5 16v3" stroke="#2020e0" stroke-width="1.100" fill="none"/></g></svg>
<svg style="left:1868.0px;top:569.0px" width="20" height="20" viewBox="0 0 20 20"><g transform="translate(10 10) scale(.9) translate(-10 -10)"><rect x="2.500" y="3" width="15" height="14" fill="#f4f4f4" stroke="#222" stroke-width="1.100"/><path d="M2.500 3l9 7-9 7" stroke="#222" fill="none"/><path d="M4 7c1.500-2 3 2 4.500 0M4 13c1.500-2 3 2 4.500 0" stroke="#222" fill="none" stroke-width=".9"/><path d="M13 8h3M13 10h3M13 12h3" stroke="#e05050" stroke-width=".9"/></g></svg>
<svg style="left:1891.0px;top:569.0px" width="20" height="20" viewBox="0 0 20 20"><g transform="translate(10 10) scale(.9) translate(-10 -10)"><rect x="2.500" y="3" width="15" height="14" fill="#f4f4f4" stroke="#222" stroke-width="1.100"/><path d="M2.500 17l15-14" stroke="#222"/><path d="M4 7c1.500-2 3 2 4.500 0M11.500 14c1.500-2 3 2 4.500 0" stroke="#222" fill="none" stroke-width=".9"/></g></svg>
<svg style="left:1868.0px;top:592.0px" width="20" height="20" viewBox="0 0 20 20"><g transform="translate(10 10) scale(.9) translate(-10 -10)"><rect x="3" y="3.500" width="14" height="13" fill="#f0f0f8" stroke="#334" stroke-width="1.100"/><path d="M6 7h8l-4 6zM6 13h8" stroke="#2020e0" stroke-width="1.100" fill="none"/></g></svg>
<svg style="left:1891.0px;top:592.0px" width="20" height="20" viewBox="0 0 20 20"><g transform="translate(10 10) scale(.9) translate(-10 -10)"><rect x="2.500" y="3" width="15" height="14" fill="#f0f0f8" stroke="#2020e0" stroke-width="1.100"/><path d="M2.500 17l15-14" stroke="#2020e0" stroke-width="1.300"/><path d="M5 6h4M5 8h4" stroke="#a01010" stroke-width=".9"/><path d="M10.500 14c1.500-2 3 2 5 0" stroke="#222" fill="none" stroke-width=".9"/></g></svg>
</body></html>
